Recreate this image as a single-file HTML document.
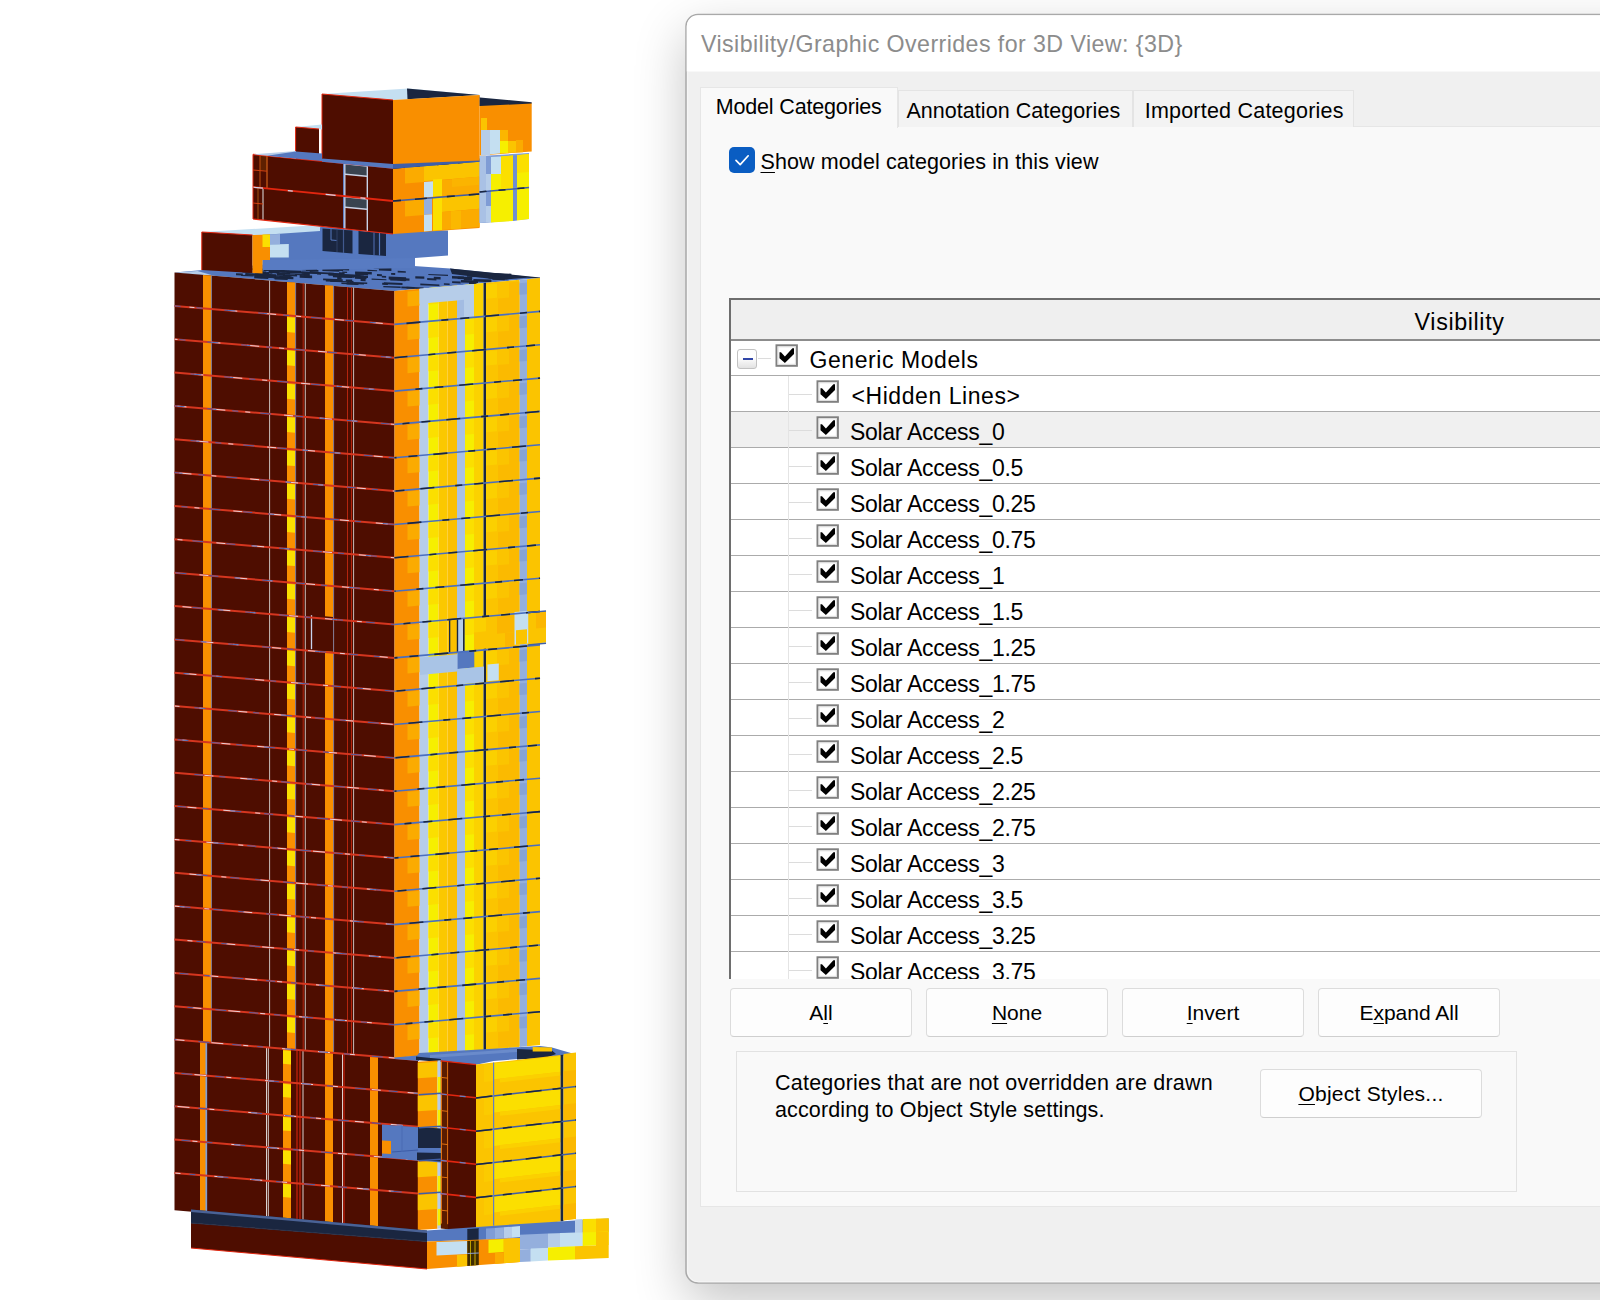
<!DOCTYPE html>
<html><head><meta charset="utf-8"><title>Visibility/Graphic Overrides</title>
<style>
html,body{margin:0;padding:0;background:#fff;}
body{width:1600px;height:1300px;overflow:hidden;position:relative;font-family:"Liberation Sans",sans-serif;color:#000;}
#bld{position:absolute;left:0;top:0;}
#dlg{position:absolute;left:686px;top:14px;width:1000px;height:1269px;border-radius:12px;background:#f0f0f0;box-shadow:0 19px 52px 0 rgba(0,0,0,0.235);}
#frame{position:absolute;left:680px;top:0;}
#w{position:absolute;left:0;top:0;width:0;height:0;}
#w>*{position:absolute;}
#titlebar{display:none}
#title{position:absolute;left:701px;top:31px;font-size:23.2px;line-height:26px;color:#8c8c8c;letter-spacing:0.43px;white-space:nowrap;}
#panel{left:700px;top:126px;width:1000px;height:1080.5px;background:#f9f9f9;border:1px solid #e6e6e6;box-sizing:border-box;}
.tab{top:90px;height:37px;background:#f3f3f3;border:1px solid #e4e4e4;border-bottom:none;box-sizing:border-box;font-size:21.5px;}
.tab span{position:absolute;top:8px;line-height:24px;white-space:nowrap;}
.tab.act{top:87px;height:41px;background:#f9f9f9;border-color:#e6e6e6;}
.tab.act span{top:7px;}
#chk{left:729px;top:147px;width:26px;height:26px;background:#0a5dc2;border-radius:5px;}
#chklbl{left:760.5px;top:149.8px;font-size:21.5px;line-height:24px;white-space:nowrap;letter-spacing:0.1px;}
u{text-decoration-thickness:1.2px;text-underline-offset:2.5px;}
#tbl{left:729px;top:298px;width:1000px;height:700px;border:2px solid #6e6e6e;background:#fff;box-sizing:border-box;overflow:hidden;}
#thead{position:absolute;left:0;top:0;width:1000px;height:39px;background:#efefef;border-bottom:2px solid #8c8c8c;}
#thead span{position:absolute;left:683.6px;top:8.5px;font-size:23.3px;line-height:26px;letter-spacing:0.62px;}
.row{position:absolute;left:0;width:1000px;height:35px;border-bottom:1px solid #ababab;border-top:0;}
.row.sel{background:#f0f0f0;}
.rt{position:absolute;top:6.6px;font-size:23px;line-height:26px;letter-spacing:-0.3px;white-space:nowrap;}
.vline{width:1px;background:#e4e4e4;}
.hline{height:1px;background:#dcdcdc;}
#minus{left:737px;top:348.5px;width:20px;height:20px;border:1px solid #c2c2c2;border-radius:3px;box-sizing:border-box;background:linear-gradient(#fdfdfd,#fff 40%,#e2e2e2);}
#minus i{position:absolute;left:5px;top:8px;width:10px;height:2px;background:#3146a8;}
.cb{display:block;}
#mask{left:701px;top:979px;width:1000px;height:60px;background:#f9f9f9;}
.btn{background:#fdfdfd;border:1px solid #dcdcdc;border-bottom-color:#cfcfcf;border-radius:4px;box-sizing:border-box;font-size:21px;}
.btn span{position:absolute;left:0;right:0;top:12px;text-align:center;line-height:24px;white-space:nowrap;}
#grp{left:736px;top:1051px;width:781px;height:141px;border:1px solid #e2e2e2;box-sizing:border-box;}
#note{left:775px;top:1070.4px;font-size:21.5px;line-height:27px;letter-spacing:0.23px;white-space:nowrap;}
</style></head>
<body>
<svg id="bld" width="680" height="1300" viewBox="0 0 680 1300" shape-rendering="geometricPrecision">
<polygon points="174.5,272.5 394.5,291 540,278 450,268.5 320,259.5" fill="#5578bf"/>
<polygon points="174.5,272.5 197.5,271 215,276" fill="#b6cde9"/>
<polygon points="450,268.5 540,277.5 540,278.5 527,277.8 500,280 452,274" fill="#1a2640"/>
<polygon points="320.8,266.7 335.2,267.3 335.2,268.4 320.8,267.9" fill="#1a2640"/>
<polygon points="377,274 381.9,274.2 381.9,276.3 377,276.1" fill="#1a2640"/>
<polygon points="244.9,271.2 250.1,271.4 250.1,272.6 244.9,272.4" fill="#1a2640"/>
<polygon points="347.5,280.8 353.5,281.1 353.5,282.5 347.5,282.3" fill="#1a2640"/>
<polygon points="401.3,286.4 414.5,286.9 414.5,288.7 401.3,288.2" fill="#1a2640"/>
<polygon points="493.7,273 511.4,273.7 511.4,275.3 493.7,274.6" fill="#1a2640"/>
<polygon points="273.2,269.2 282.2,269.5 282.2,272.1 273.2,271.8" fill="#1a2640"/>
<polygon points="282.9,274.2 297.1,274.7 297.1,276.5 282.9,275.9" fill="#1a2640"/>
<polygon points="380.2,268.3 385.1,268.4 385.1,269.9 380.2,269.7" fill="#1a2640"/>
<polygon points="415.3,276.2 424.3,276.6 424.3,278.7 415.3,278.4" fill="#1a2640"/>
<polygon points="355.1,271.4 371.8,272.1 371.8,274.5 355.1,273.8" fill="#1a2640"/>
<polygon points="299.7,274.9 312.1,275.4 312.1,278.2 299.7,277.7" fill="#1a2640"/>
<polygon points="428.3,273.9 448,274.7 448,275.9 428.3,275.1" fill="#1a2640"/>
<polygon points="345.8,279.4 352.2,279.6 352.2,281.6 345.8,281.4" fill="#1a2640"/>
<polygon points="245.4,273 261.6,273.6 261.6,275.8 245.4,275.1" fill="#1a2640"/>
<polygon points="467,274.5 482.1,275.1 482.1,277.3 467,276.7" fill="#1a2640"/>
<polygon points="388.7,276.6 406.1,277.3 406.1,280.2 388.7,279.5" fill="#1a2640"/>
<polygon points="360.6,278.7 365.6,278.9 365.6,281.3 360.6,281.1" fill="#1a2640"/>
<polygon points="406.5,286.8 423.6,287.5 423.6,289.1 406.5,288.4" fill="#1a2640"/>
<polygon points="337.2,277.1 341.6,277.3 341.6,279.2 337.2,279" fill="#1a2640"/>
<polygon points="279.5,269.2 284.5,269.4 284.5,271.9 279.5,271.7" fill="#1a2640"/>
<polygon points="269.3,270.3 279.5,270.8 279.5,273.5 269.3,273.1" fill="#1a2640"/>
<polygon points="256.4,271.8 269.1,272.3 269.1,275 256.4,274.5" fill="#1a2640"/>
<polygon points="452.1,281.2 460.6,281.5 460.6,283.4 452.1,283" fill="#1a2640"/>
<polygon points="330.1,280.5 349.4,281.3 349.4,282.6 330.1,281.8" fill="#1a2640"/>
<polygon points="281.7,270.4 289.4,270.7 289.4,272.7 281.7,272.4" fill="#1a2640"/>
<polygon points="391.1,272.9 395.2,273 395.2,274.9 391.1,274.7" fill="#1a2640"/>
<polygon points="332.9,274.9 352.1,275.7 352.1,278.1 332.9,277.3" fill="#1a2640"/>
<polygon points="371.6,278.6 386.4,279.2 386.4,280.3 371.6,279.7" fill="#1a2640"/>
<polygon points="473.4,278.9 491.4,279.6 491.4,282.2 473.4,281.5" fill="#1a2640"/>
<polygon points="339,272.3 344.6,272.5 344.6,274.8 339,274.6" fill="#1a2640"/>
<polygon points="251.5,268.5 258.8,268.8 258.8,270.2 251.5,269.9" fill="#1a2640"/>
<polygon points="325.1,265.2 329.1,265.4 329.1,266.7 325.1,266.5" fill="#1a2640"/>
<polygon points="261.9,271.2 266.3,271.4 266.3,274.1 261.9,274" fill="#1a2640"/>
<polygon points="397.7,270.8 405.8,271.2 405.8,272.8 397.7,272.5" fill="#1a2640"/>
<polygon points="331.5,266.8 349.1,267.5 349.1,270.5 331.5,269.8" fill="#1a2640"/>
<polygon points="358.5,275.1 363.9,275.4 363.9,276.6 358.5,276.3" fill="#1a2640"/>
<polygon points="325.8,269 343.1,269.7 343.1,271.1 325.8,270.4" fill="#1a2640"/>
<polygon points="241.1,274.8 253.6,275.3 253.6,276.5 241.1,276" fill="#1a2640"/>
<polygon points="378.9,267.5 391.4,268 391.4,270.9 378.9,270.4" fill="#1a2640"/>
<polygon points="463.8,278.6 472,278.9 472,280.6 463.8,280.3" fill="#1a2640"/>
<polygon points="279.3,276 291.8,276.5 291.8,279 279.3,278.5" fill="#1a2640"/>
<polygon points="322.4,268.1 339.3,268.8 339.3,271.7 322.4,271.1" fill="#1a2640"/>
<polygon points="460.9,279.9 478,280.6 478,283.1 460.9,282.4" fill="#1a2640"/>
<polygon points="295.1,274 304.8,274.4 304.8,275.5 295.1,275.1" fill="#1a2640"/>
<polygon points="242.4,270 250.6,270.3 250.6,272.7 242.4,272.4" fill="#1a2640"/>
<polygon points="488.5,275.6 507.5,276.4 507.5,279.4 488.5,278.6" fill="#1a2640"/>
<polygon points="488.1,275 495.6,275.3 495.6,276.8 488.1,276.5" fill="#1a2640"/>
<polygon points="287.1,270.2 301.1,270.8 301.1,273.6 287.1,273" fill="#1a2640"/>
<polygon points="457.7,276.4 472.2,277 472.2,279.6 457.7,279" fill="#1a2640"/>
<polygon points="257.5,273.6 276,274.3 276,276.9 257.5,276.2" fill="#1a2640"/>
<polygon points="433.8,276.8 440.6,277 440.6,279.6 433.8,279.3" fill="#1a2640"/>
<polygon points="323.1,278.4 342.7,279.2 342.7,281 323.1,280.2" fill="#1a2640"/>
<polygon points="341.4,282.6 357,283.2 357,284.5 341.4,283.9" fill="#1a2640"/>
<polygon points="268.7,269.4 287.1,270.2 287.1,272.8 268.7,272" fill="#1a2640"/>
<polygon points="273.7,276.1 293.4,276.9 293.4,279.2 273.7,278.5" fill="#1a2640"/>
<polygon points="327.9,274.3 334,274.5 334,275.5 327.9,275.3" fill="#1a2640"/>
<polygon points="492.3,276.9 504.7,277.4 504.7,280.3 492.3,279.8" fill="#1a2640"/>
<polygon points="350,281.9 367.2,282.5 367.2,284 350,283.3" fill="#1a2640"/>
<polygon points="301.7,271.6 309.6,271.9 309.6,274.1 301.7,273.7" fill="#1a2640"/>
<polygon points="303.7,273.2 309.8,273.4 309.8,276.2 303.7,276" fill="#1a2640"/>
<polygon points="328.8,272.7 342.1,273.2 342.1,276 328.8,275.5" fill="#1a2640"/>
<polygon points="346.5,282.4 358.5,282.9 358.5,285 346.5,284.5" fill="#1a2640"/>
<polygon points="373.7,267.1 384.8,267.5 384.8,268.9 373.7,268.4" fill="#1a2640"/>
<polygon points="236,273.3 242.8,273.6 242.8,275.6 236,275.3" fill="#1a2640"/>
<polygon points="427.2,278.1 436.4,278.5 436.4,280.5 427.2,280.1" fill="#1a2640"/>
<polygon points="382.2,282.7 387.9,282.9 387.9,285 382.2,284.8" fill="#1a2640"/>
<polygon points="300.9,271.4 317.2,272 317.2,274 300.9,273.4" fill="#1a2640"/>
<polygon points="383.9,282.3 402.5,283.1 402.5,285 383.9,284.2" fill="#1a2640"/>
<polygon points="397.3,277.9 409.5,278.4 409.5,280.8 397.3,280.3" fill="#1a2640"/>
<polygon points="354.9,275.8 366.5,276.3 366.5,279.2 354.9,278.7" fill="#1a2640"/>
<polygon points="420.3,283.6 439.4,284.4 439.4,285.9 420.3,285.2" fill="#1a2640"/>
<polygon points="383.3,285.9 400.7,286.6 400.7,287.9 383.3,287.2" fill="#1a2640"/>
<polygon points="267.2,272.1 272.4,272.3 272.4,273.8 267.2,273.6" fill="#1a2640"/>
<polygon points="254.4,273.5 270.9,274.2 270.9,277 254.4,276.3" fill="#1a2640"/>
<polygon points="275.9,275.2 290.5,275.8 290.5,277.1 275.9,276.5" fill="#1a2640"/>
<polygon points="469,281 476.5,281.3 476.5,284.2 469,283.9" fill="#1a2640"/>
<polygon points="340.5,274 360.4,274.8 360.4,277.5 340.5,276.7" fill="#1a2640"/>
<polygon points="277.8,272.4 290,272.9 290,274.6 277.8,274.1" fill="#1a2640"/>
<polygon points="286.9,271.5 302.4,272.1 302.4,273.1 286.9,272.5" fill="#1a2640"/>
<polygon points="381.8,275.8 386.1,276 386.1,277.7 381.8,277.5" fill="#1a2640"/>
<polygon points="400.3,278 405.4,278.2 405.4,281.2 400.3,281" fill="#1a2640"/>
<polygon points="443.9,283.2 449.6,283.4 449.6,285 443.9,284.7" fill="#1a2640"/>
<polygon points="245.5,273.8 253.8,274.2 253.8,275.4 245.5,275.1" fill="#1a2640"/>
<polygon points="346.9,282.3 364,283 364,284.5 346.9,283.9" fill="#1a2640"/>
<polygon points="274.6,277.1 287.7,277.6 287.7,280 274.6,279.5" fill="#1a2640"/>
<polygon points="258.7,268.5 273.7,269.1 273.7,270.9 258.7,270.3" fill="#1a2640"/>
<polygon points="254.2,275.7 268.3,276.3 268.3,278.9 254.2,278.3" fill="#1a2640"/>
<polygon points="257.2,275.2 262.3,275.4 262.3,278.2 257.2,278" fill="#1a2640"/>
<polygon points="355.2,272.2 368.1,272.7 368.1,275.6 355.2,275" fill="#1a2640"/>
<polygon points="306,269.6 318.4,270.1 318.4,271.6 306,271.1" fill="#1a2640"/>
<polygon points="264,269.5 268.8,269.6 268.8,271.1 264,270.9" fill="#1a2640"/>
<polygon points="317.7,272.1 333.8,272.8 333.8,274.4 317.7,273.7" fill="#1a2640"/>
<polygon points="367.5,269.8 377.1,270.2 377.1,271.2 367.5,270.9" fill="#1a2640"/>
<polygon points="301.4,268.2 317.1,268.8 317.1,270.9 301.4,270.3" fill="#1a2640"/>
<polygon points="285.2,273.1 304.2,273.9 304.2,275.1 285.2,274.3" fill="#1a2640"/>
<polygon points="452,275.9 463.9,276.4 463.9,279 452,278.6" fill="#1a2640"/>
<polygon points="339.2,274.3 354.2,274.9 354.2,277.8 339.2,277.2" fill="#1a2640"/>
<polygon points="325.8,279.2 341.1,279.8 341.1,282.1 325.8,281.5" fill="#1a2640"/>
<polygon points="342.2,271.5 347.1,271.7 347.1,273 342.2,272.8" fill="#1a2640"/>
<polygon points="253.7,274 261.8,274.4 261.8,275.7 253.7,275.4" fill="#1a2640"/>
<polygon points="257.4,275.1 275.3,275.8 275.3,278.2 257.4,277.5" fill="#1a2640"/>
<polygon points="309.7,271.1 318.4,271.5 318.4,273.4 309.7,273" fill="#1a2640"/>
<polygon points="276.7,272.5 285,272.8 285,275.8 276.7,275.4" fill="#1a2640"/>
<polygon points="492.7,276.2 500.7,276.6 500.7,279.5 492.7,279.2" fill="#1a2640"/>
<polygon points="317,272.8 321,273 321,274.7 317,274.6" fill="#1a2640"/>
<polygon points="360.8,275.7 368,275.9 368,278 360.8,277.7" fill="#1a2640"/>
<polygon points="236.3,269.8 241.7,270 241.7,271.8 236.3,271.6" fill="#1a2640"/>
<polygon points="246,268.2 254.9,268.5 254.9,270 246,269.6" fill="#1a2640"/>
<polygon points="390.2,278.2 406.2,278.8 406.2,281.1 390.2,280.5" fill="#1a2640"/>
<polygon points="262.5,232 322,227 448,230.5 448,255.5 415,258 415,268 262.5,266" fill="#5578bf"/>
<polygon points="262.5,260 415,258 415,268 300,270 262.5,270" fill="#587bc2"/>
<polygon points="322.5,228.5 352.5,230.5 352.5,253.5 322.5,251" fill="#1a2640"/>
<polygon points="358.5,231 386,233.5 386,256 358.5,254" fill="#1a2640"/>
<line x1="331" y1="229" x2="331" y2="240" stroke="#5578bf" stroke-width="1"/>
<line x1="331" y1="240" x2="337" y2="240.5" stroke="#5578bf" stroke-width="1"/>
<line x1="337" y1="230" x2="337" y2="252" stroke="#2c3c60" stroke-width="1.2"/>
<line x1="343.5" y1="230" x2="343.5" y2="253" stroke="#41598f" stroke-width="1.2"/>
<line x1="374" y1="232.5" x2="374" y2="255" stroke="#41598f" stroke-width="1.5"/>
<line x1="379.5" y1="233" x2="379.5" y2="255.5" stroke="#5578bf" stroke-width="1.2"/>
<polygon points="201.8,232 320,225 320,231 252.5,235.5" fill="#c4dff1"/>
<polygon points="201.8,232 252.5,235 252.5,273 201.8,270" fill="#4e0d00"/>
<polygon points="252.5,235 270,234.5 270,260 262.5,260 262.5,273.5 252.5,273" fill="#f98f00"/>
<polygon points="262.5,234.5 270,234.5 270,247 262.5,247" fill="#fbdf00"/>
<polygon points="270,234.3 280,234 280,244 270,244.5" fill="#94afdd"/>
<polygon points="270,244.5 288.8,244 288.8,257.5 270,257.5" fill="#c4dff1"/>
<line x1="201.8" y1="232" x2="252.5" y2="235" stroke="#e2260f" stroke-width="1.2"/>
<line x1="201.8" y1="232" x2="201.8" y2="270" stroke="#e2260f" stroke-width="1"/>
<polygon points="253,154.4 393,168 393,234 253,219" fill="#4e0d00"/>
<polygon points="260,155.2 267,155.8 267,171 260,170.5" fill="#5e2000"/>
<line x1="260" y1="155" x2="260" y2="187" stroke="#c05010" stroke-width="1"/>
<line x1="267" y1="155.8" x2="267" y2="188" stroke="#d06018" stroke-width="1.2"/>
<line x1="253" y1="170" x2="267" y2="171.2" stroke="#d04010" stroke-width="1"/>
<line x1="263" y1="188" x2="263" y2="220" stroke="#c9c2c0" stroke-width="1.2"/>
<line x1="258" y1="187.5" x2="258" y2="219.5" stroke="#a05010" stroke-width="1"/>
<line x1="253" y1="203" x2="263" y2="204" stroke="#d04010" stroke-width="1"/>
<polygon points="343,163.2 368,165.7 368,198.5 343,196" fill="#c9d3e6"/>
<polygon points="345.5,164.6 366.6,166.8 366.6,175.6 345.5,173.6" fill="#39434f"/>
<polygon points="345.5,175 366.6,177 366.6,198 345.5,196" fill="#4e0d00"/>
<line x1="343.6" y1="163.4" x2="343.6" y2="196" stroke="#5f7fc4" stroke-width="1.2"/>
<polygon points="343,196.2 368,198.7 368,231.5 343,229" fill="#c9d3e6"/>
<polygon points="345.5,197.6 366.6,199.8 366.6,208.6 345.5,206.6" fill="#39434f"/>
<polygon points="345.5,208 366.6,210 366.6,231 345.5,229" fill="#4e0d00"/>
<line x1="343.6" y1="196.4" x2="343.6" y2="229" stroke="#5f7fc4" stroke-width="1.2"/>
<line x1="253" y1="154.4" x2="393" y2="168" stroke="#e2260f" stroke-width="1.5"/>
<line x1="253" y1="187" x2="393" y2="201" stroke="#e2260f" stroke-width="1.8"/>
<line x1="253" y1="187.2" x2="393" y2="201.2" stroke="#cfd6ea" stroke-width="1.2" stroke-dasharray="10 25 5 33"/>
<line x1="253" y1="219" x2="393" y2="234" stroke="#e2260f" stroke-width="1.2"/>
<line x1="253" y1="154.4" x2="253" y2="219" stroke="#e2260f" stroke-width="1"/>
<polygon points="393,168 479.6,161 479.6,228 393,234" fill="#f98f00"/>
<polygon points="405,167 424,165.5 424,182 405,183.5" fill="#fbab00"/>
<polygon points="424,165.5 479.6,161 479.6,176.8 424,181.3" fill="#fbc400"/>
<polygon points="424,182 433,181.3 433,196.8 424,197.5" fill="#c4dff1"/>
<polygon points="433,179.6 442,178.9 442,196 433,196.8" fill="#fbdf00"/>
<polygon points="442,179.9 479.6,176.8 479.6,193 442,196" fill="#fbab00"/>
<polygon points="452,179.1 479.6,176.8 479.6,184.8 452,187" fill="#fbb400"/>
<polygon points="405,201 424,199.5 424,215 405,216.5" fill="#fbab00"/>
<polygon points="424,198.5 432,197.8 432,214.3 424,215" fill="#94afdd"/>
<polygon points="424,215 432,214.3 432,230.8 424,231.5" fill="#c4dff1"/>
<polygon points="433,197.8 442,197 442,230 433,230.8" fill="#fbdf00"/>
<polygon points="442,197 479.6,194 479.6,208.8 442,211.9" fill="#fbc400"/>
<polygon points="442,211.9 479.6,208.8 479.6,227 442,230" fill="#fbab00"/>
<polygon points="451,211.2 461,210.4 461,228.5 451,229.3" fill="#fbb800"/>
<line x1="393" y1="201" x2="479.6" y2="194" stroke="#3f5fa8" stroke-width="1.6"/>
<line x1="393" y1="201" x2="479.6" y2="194" stroke="#1a2640" stroke-width="1.6" stroke-dasharray="8 14 12 20"/>
<line x1="393" y1="168" x2="479.6" y2="161" stroke="#3f5fa8" stroke-width="1.4"/>
<line x1="393" y1="168" x2="479.6" y2="161" stroke="#1a2640" stroke-width="1.4" stroke-dasharray="12 9 6 17"/>
<polygon points="479.6,156 529,153 529,219 483,223 479.6,223" fill="#7f9cd5"/>
<polygon points="479.6,156 486,155.6 486,222.5 479.6,223" fill="#a9c1e5"/>
<polygon points="491,157 501,156.5 501,174 491,174" fill="#c4dff1"/>
<polygon points="501,156.5 513,155.5 513,221 491,222.5 491,174 501,174" fill="#f6ef00"/>
<polygon points="501,156.5 513,155.5 513,188 501,189" fill="#fbdf00"/>
<polygon points="513,155.5 517,155.2 517,220.5 513,221" fill="#6f8fd0"/>
<polygon points="517,155.2 529,154 529,219 517,220.5" fill="#f6ef00"/>
<polygon points="517,155.2 529,154 529,172 517,173" fill="#fbdf00"/>
<line x1="479.6" y1="192" x2="529" y2="187.5" stroke="#3f5fa8" stroke-width="1.5"/>
<line x1="479.6" y1="192" x2="529" y2="187.5" stroke="#1a2640" stroke-width="1.5" stroke-dasharray="7 12"/>
<polygon points="486,174 491,174 491,190 486,190.5" fill="#b6cde9"/>
<polygon points="486,206 491,206 491,222 486,222.5" fill="#b6cde9"/>
<polygon points="322,155 393,162 393,168.8 322,161.8" fill="#5578bf"/>
<polygon points="393,162 479.6,158.5 479.6,161.8 393,168.8" fill="#3f5fa8"/>
<polygon points="322,94 393,100 479.6,95 408.6,88.4" fill="#c4dff1"/>
<polygon points="407,88.4 479.6,95 407.5,99.2" fill="#1a2640"/>
<polygon points="322,94 393,100 393,164 322,158.4" fill="#4e0d00"/>
<polygon points="393,100 479.6,95 479.6,160.5 393,164" fill="#f98f00"/>
<line x1="322" y1="94" x2="393" y2="100" stroke="#e2260f" stroke-width="1.2"/>
<line x1="322" y1="94" x2="322" y2="158.4" stroke="#e2260f" stroke-width="1"/>
<polygon points="479.6,100 531.7,103 531.7,151.5 479.6,155.5" fill="#f98f00"/>
<polygon points="479.6,95 480,97.5 531.7,102.3 531.7,103.6 480,106 479.6,106" fill="#1a2640"/>
<polygon points="481,118 487,118 487,130 481,130" fill="#fbc400"/>
<polygon points="481,130 500,130 500,153.5 481,155" fill="#c4dff1"/>
<polygon points="481,130 490,130 490,155 481,155.5" fill="#b6cde9"/>
<polygon points="500,130 508,130 508,141 500,141" fill="#fbb600"/>
<polygon points="500,141 508,141 508,153 500,153.5" fill="#f6ef00"/>
<polygon points="508,141 516,141 516,152.6 508,153" fill="#fbc400"/>
<polygon points="516,140 523,140 523,152.3 516,152.6" fill="#fbab00"/>
<polygon points="295.6,127 322,124.5 322,129.5 319,129" fill="#c4dff1"/>
<polygon points="295.6,127 319,129 319,157 295.6,155" fill="#4e0d00"/>
<line x1="295.6" y1="127" x2="319" y2="129" stroke="#e2260f" stroke-width="1"/>
<line x1="295.6" y1="127" x2="295.6" y2="155" stroke="#e2260f" stroke-width="1"/>
<polygon points="253,154.4 296,151 296,158.5" fill="#b6cde9"/>
<polygon points="267,155.8 296,151.5 322,153.5 322,161 300,159" fill="#5578bf"/>
<polygon points="174.5,272.5 394.5,291 394.5,1058.1 174.5,1039.6" fill="#4e0d00"/>
<polygon points="174.5,1039.6 418,1060 418,1230.8 174.5,1210.3" fill="#4e0d00"/>
<polygon points="203,274.9 211,275.6 211,1042.6 203,1041.9" fill="#f98f00"/>
<polygon points="287,282 295,282.6 295,1049.7 287,1049" fill="#f98f00"/>
<polygon points="287,317 295,317.7 295,332.7 287,332" fill="#fbdf00"/>
<polygon points="287,350.3 295,351 295,366 287,365.3" fill="#fbdf00"/>
<polygon points="287,383.7 295,384.4 295,399.4 287,398.7" fill="#fbdf00"/>
<polygon points="287,417 295,417.7 295,432.7 287,432" fill="#fbdf00"/>
<polygon points="287,450.4 295,451.1 295,466.1 287,465.4" fill="#fbdf00"/>
<polygon points="287,483.7 295,484.4 295,499.4 287,498.7" fill="#fbdf00"/>
<polygon points="287,517.1 295,517.8 295,532.8 287,532.1" fill="#fbdf00"/>
<polygon points="287,550.4 295,551.1 295,566.1 287,565.4" fill="#fbdf00"/>
<polygon points="287,583.8 295,584.5 295,599.5 287,598.8" fill="#fbdf00"/>
<polygon points="287,617.1 295,617.8 295,632.8 287,632.1" fill="#fbdf00"/>
<polygon points="287,650.5 295,651.2 295,666.2 287,665.5" fill="#fbdf00"/>
<polygon points="287,683.8 295,684.5 295,699.5 287,698.8" fill="#fbdf00"/>
<polygon points="287,717.2 295,717.9 295,732.9 287,732.2" fill="#fbdf00"/>
<polygon points="287,750.5 295,751.2 295,766.2 287,765.5" fill="#fbdf00"/>
<polygon points="287,783.9 295,784.6 295,799.6 287,798.9" fill="#fbdf00"/>
<polygon points="287,817.2 295,817.9 295,832.9 287,832.2" fill="#fbdf00"/>
<polygon points="287,850.6 295,851.3 295,866.3 287,865.6" fill="#fbdf00"/>
<polygon points="287,883.9 295,884.6 295,899.6 287,898.9" fill="#fbdf00"/>
<polygon points="287,917.3 295,918 295,933 287,932.3" fill="#fbdf00"/>
<polygon points="287,950.6 295,951.3 295,966.3 287,965.6" fill="#fbdf00"/>
<polygon points="287,984 295,984.7 295,999.7 287,999" fill="#fbdf00"/>
<polygon points="287,1017.3 295,1018 295,1033 287,1032.3" fill="#fbdf00"/>
<polygon points="325,285.2 333,285.8 333,617 325,616.3" fill="#f98f00"/>
<polygon points="325,651 333,651.7 333,1052.9 325,1052.2" fill="#f98f00"/>
<line x1="311.5" y1="615.2" x2="311.5" y2="649.2" stroke="#c8d4ee" stroke-width="1.3"/>
<line x1="269.6" y1="280.5" x2="269.6" y2="1047.5" stroke="#d8d2d0" stroke-width="0.9"/>
<line x1="303.2" y1="283.3" x2="303.2" y2="1050.4" stroke="#c02810" stroke-width="0.9"/>
<line x1="305.3" y1="283.5" x2="305.3" y2="1050.5" stroke="#d8d2d0" stroke-width="0.9"/>
<line x1="347.5" y1="287" x2="347.5" y2="1054.1" stroke="#c02810" stroke-width="0.9"/>
<line x1="351.5" y1="287.4" x2="351.5" y2="1054.4" stroke="#c02810" stroke-width="0.9"/>
<line x1="353.6" y1="287.6" x2="353.6" y2="1054.6" stroke="#d8d2d0" stroke-width="0.9"/>
<line x1="211.4" y1="275.6" x2="211.4" y2="1042.7" stroke="#8d90ad" stroke-width="0.9"/>
<line x1="295.6" y1="282.7" x2="295.6" y2="1049.7" stroke="#8d90ad" stroke-width="0.9"/>
<line x1="333.6" y1="285.9" x2="333.6" y2="1052.9" stroke="#8d90ad" stroke-width="0.9"/>
<polygon points="200,1041.7 206,1042.2 206,1212.3 200,1211.8" fill="#f98f00"/>
<line x1="206.3" y1="1042.2" x2="206.3" y2="1212.3" stroke="#7f9fd6" stroke-width="1.7"/>
<polygon points="283,1048.7 291,1049.3 291,1219.4 283,1218.8" fill="#f98f00"/>
<polygon points="283,1050.3 291,1051 291,1064.4 283,1063.7" fill="#fbdf00"/>
<polygon points="283,1083.7 291,1084.4 291,1097.7 283,1097" fill="#fbdf00"/>
<polygon points="283,1117 291,1117.7 291,1131.1 283,1130.4" fill="#fbdf00"/>
<polygon points="283,1150.4 291,1151.1 291,1164.4 283,1163.7" fill="#fbdf00"/>
<polygon points="283,1183.7 291,1184.4 291,1197.8 283,1197.1" fill="#fbdf00"/>
<polygon points="325,1052.2 333,1052.9 333,1223 325,1222.3" fill="#f98f00"/>
<polygon points="370,1056 378,1056.7 378,1226.7 370,1226.1" fill="#f98f00"/>
<line x1="266.5" y1="1047.3" x2="266.5" y2="1217.4" stroke="#d8d2d0" stroke-width="1.0"/>
<line x1="268.3" y1="1047.4" x2="268.3" y2="1217.5" stroke="#d8d2d0" stroke-width="1.0"/>
<line x1="297" y1="1049.9" x2="297" y2="1219.9" stroke="#e2260f" stroke-width="1.0"/>
<line x1="300" y1="1050.1" x2="300" y2="1220.2" stroke="#e2260f" stroke-width="1.0"/>
<line x1="303" y1="1050.4" x2="303" y2="1220.4" stroke="#d8d2d0" stroke-width="1.0"/>
<line x1="342.5" y1="1053.7" x2="342.5" y2="1223.8" stroke="#d8d2d0" stroke-width="1.0"/>
<line x1="344" y1="1053.8" x2="344" y2="1223.9" stroke="#e2260f" stroke-width="1.0"/>
<line x1="174.5" y1="305.9" x2="394.5" y2="324.4" stroke="#d5361f" stroke-width="2.0"/>
<line x1="174.5" y1="305.9" x2="394.5" y2="324.4" stroke="#e9e4ee" stroke-width="0.9" stroke-dasharray="12 20 5 34 9 27" stroke-dashoffset="17"/>
<line x1="174.5" y1="305.9" x2="394.5" y2="324.4" stroke="#3f62b4" stroke-width="0.9" stroke-dasharray="0 14 9 16 6 22 11 9" stroke-dashoffset="17"/>
<line x1="174.5" y1="339.2" x2="394.5" y2="357.7" stroke="#d5361f" stroke-width="2.0"/>
<line x1="174.5" y1="339.2" x2="394.5" y2="357.7" stroke="#e9e4ee" stroke-width="0.9" stroke-dasharray="12 20 5 34 9 27" stroke-dashoffset="34"/>
<line x1="174.5" y1="339.2" x2="394.5" y2="357.7" stroke="#3f62b4" stroke-width="0.9" stroke-dasharray="0 14 9 16 6 22 11 9" stroke-dashoffset="34"/>
<line x1="174.5" y1="372.6" x2="394.5" y2="391.1" stroke="#d5361f" stroke-width="2.0"/>
<line x1="174.5" y1="372.6" x2="394.5" y2="391.1" stroke="#e9e4ee" stroke-width="0.9" stroke-dasharray="12 20 5 34 9 27" stroke-dashoffset="51"/>
<line x1="174.5" y1="372.6" x2="394.5" y2="391.1" stroke="#3f62b4" stroke-width="0.9" stroke-dasharray="0 14 9 16 6 22 11 9" stroke-dashoffset="51"/>
<line x1="174.5" y1="405.9" x2="394.5" y2="424.4" stroke="#d5361f" stroke-width="2.0"/>
<line x1="174.5" y1="405.9" x2="394.5" y2="424.4" stroke="#e9e4ee" stroke-width="0.9" stroke-dasharray="12 20 5 34 9 27" stroke-dashoffset="68"/>
<line x1="174.5" y1="405.9" x2="394.5" y2="424.4" stroke="#3f62b4" stroke-width="0.9" stroke-dasharray="0 14 9 16 6 22 11 9" stroke-dashoffset="68"/>
<line x1="174.5" y1="439.2" x2="394.5" y2="457.8" stroke="#d5361f" stroke-width="2.0"/>
<line x1="174.5" y1="439.2" x2="394.5" y2="457.8" stroke="#e9e4ee" stroke-width="0.9" stroke-dasharray="12 20 5 34 9 27" stroke-dashoffset="85"/>
<line x1="174.5" y1="439.2" x2="394.5" y2="457.8" stroke="#3f62b4" stroke-width="0.9" stroke-dasharray="0 14 9 16 6 22 11 9" stroke-dashoffset="85"/>
<line x1="174.5" y1="472.6" x2="394.5" y2="491.1" stroke="#d5361f" stroke-width="2.0"/>
<line x1="174.5" y1="472.6" x2="394.5" y2="491.1" stroke="#e9e4ee" stroke-width="0.9" stroke-dasharray="12 20 5 34 9 27" stroke-dashoffset="102"/>
<line x1="174.5" y1="472.6" x2="394.5" y2="491.1" stroke="#3f62b4" stroke-width="0.9" stroke-dasharray="0 14 9 16 6 22 11 9" stroke-dashoffset="102"/>
<line x1="174.5" y1="506" x2="394.5" y2="524.5" stroke="#d5361f" stroke-width="2.0"/>
<line x1="174.5" y1="506" x2="394.5" y2="524.5" stroke="#e9e4ee" stroke-width="0.9" stroke-dasharray="12 20 5 34 9 27" stroke-dashoffset="119"/>
<line x1="174.5" y1="506" x2="394.5" y2="524.5" stroke="#3f62b4" stroke-width="0.9" stroke-dasharray="0 14 9 16 6 22 11 9" stroke-dashoffset="119"/>
<line x1="174.5" y1="539.3" x2="394.5" y2="557.8" stroke="#d5361f" stroke-width="2.0"/>
<line x1="174.5" y1="539.3" x2="394.5" y2="557.8" stroke="#e9e4ee" stroke-width="0.9" stroke-dasharray="12 20 5 34 9 27" stroke-dashoffset="136"/>
<line x1="174.5" y1="539.3" x2="394.5" y2="557.8" stroke="#3f62b4" stroke-width="0.9" stroke-dasharray="0 14 9 16 6 22 11 9" stroke-dashoffset="136"/>
<line x1="174.5" y1="572.7" x2="394.5" y2="591.2" stroke="#d5361f" stroke-width="2.0"/>
<line x1="174.5" y1="572.7" x2="394.5" y2="591.2" stroke="#e9e4ee" stroke-width="0.9" stroke-dasharray="12 20 5 34 9 27" stroke-dashoffset="153"/>
<line x1="174.5" y1="572.7" x2="394.5" y2="591.2" stroke="#3f62b4" stroke-width="0.9" stroke-dasharray="0 14 9 16 6 22 11 9" stroke-dashoffset="153"/>
<line x1="174.5" y1="606" x2="394.5" y2="624.5" stroke="#d5361f" stroke-width="2.0"/>
<line x1="174.5" y1="606" x2="394.5" y2="624.5" stroke="#e9e4ee" stroke-width="0.9" stroke-dasharray="12 20 5 34 9 27" stroke-dashoffset="170"/>
<line x1="174.5" y1="606" x2="394.5" y2="624.5" stroke="#3f62b4" stroke-width="0.9" stroke-dasharray="0 14 9 16 6 22 11 9" stroke-dashoffset="170"/>
<line x1="174.5" y1="639.4" x2="394.5" y2="657.9" stroke="#d5361f" stroke-width="2.0"/>
<line x1="174.5" y1="639.4" x2="394.5" y2="657.9" stroke="#e9e4ee" stroke-width="0.9" stroke-dasharray="12 20 5 34 9 27" stroke-dashoffset="187"/>
<line x1="174.5" y1="639.4" x2="394.5" y2="657.9" stroke="#3f62b4" stroke-width="0.9" stroke-dasharray="0 14 9 16 6 22 11 9" stroke-dashoffset="187"/>
<line x1="174.5" y1="672.7" x2="394.5" y2="691.2" stroke="#d5361f" stroke-width="2.0"/>
<line x1="174.5" y1="672.7" x2="394.5" y2="691.2" stroke="#e9e4ee" stroke-width="0.9" stroke-dasharray="12 20 5 34 9 27" stroke-dashoffset="204"/>
<line x1="174.5" y1="672.7" x2="394.5" y2="691.2" stroke="#3f62b4" stroke-width="0.9" stroke-dasharray="0 14 9 16 6 22 11 9" stroke-dashoffset="204"/>
<line x1="174.5" y1="706" x2="394.5" y2="724.5" stroke="#d5361f" stroke-width="2.0"/>
<line x1="174.5" y1="706" x2="394.5" y2="724.5" stroke="#e9e4ee" stroke-width="0.9" stroke-dasharray="12 20 5 34 9 27" stroke-dashoffset="221"/>
<line x1="174.5" y1="706" x2="394.5" y2="724.5" stroke="#3f62b4" stroke-width="0.9" stroke-dasharray="0 14 9 16 6 22 11 9" stroke-dashoffset="221"/>
<line x1="174.5" y1="739.4" x2="394.5" y2="757.9" stroke="#d5361f" stroke-width="2.0"/>
<line x1="174.5" y1="739.4" x2="394.5" y2="757.9" stroke="#e9e4ee" stroke-width="0.9" stroke-dasharray="12 20 5 34 9 27" stroke-dashoffset="238"/>
<line x1="174.5" y1="739.4" x2="394.5" y2="757.9" stroke="#3f62b4" stroke-width="0.9" stroke-dasharray="0 14 9 16 6 22 11 9" stroke-dashoffset="238"/>
<line x1="174.5" y1="772.8" x2="394.5" y2="791.2" stroke="#d5361f" stroke-width="2.0"/>
<line x1="174.5" y1="772.8" x2="394.5" y2="791.2" stroke="#e9e4ee" stroke-width="0.9" stroke-dasharray="12 20 5 34 9 27" stroke-dashoffset="255"/>
<line x1="174.5" y1="772.8" x2="394.5" y2="791.2" stroke="#3f62b4" stroke-width="0.9" stroke-dasharray="0 14 9 16 6 22 11 9" stroke-dashoffset="255"/>
<line x1="174.5" y1="806.1" x2="394.5" y2="824.6" stroke="#d5361f" stroke-width="2.0"/>
<line x1="174.5" y1="806.1" x2="394.5" y2="824.6" stroke="#e9e4ee" stroke-width="0.9" stroke-dasharray="12 20 5 34 9 27" stroke-dashoffset="272"/>
<line x1="174.5" y1="806.1" x2="394.5" y2="824.6" stroke="#3f62b4" stroke-width="0.9" stroke-dasharray="0 14 9 16 6 22 11 9" stroke-dashoffset="272"/>
<line x1="174.5" y1="839.5" x2="394.5" y2="858" stroke="#d5361f" stroke-width="2.0"/>
<line x1="174.5" y1="839.5" x2="394.5" y2="858" stroke="#e9e4ee" stroke-width="0.9" stroke-dasharray="12 20 5 34 9 27" stroke-dashoffset="289"/>
<line x1="174.5" y1="839.5" x2="394.5" y2="858" stroke="#3f62b4" stroke-width="0.9" stroke-dasharray="0 14 9 16 6 22 11 9" stroke-dashoffset="289"/>
<line x1="174.5" y1="872.8" x2="394.5" y2="891.3" stroke="#d5361f" stroke-width="2.0"/>
<line x1="174.5" y1="872.8" x2="394.5" y2="891.3" stroke="#e9e4ee" stroke-width="0.9" stroke-dasharray="12 20 5 34 9 27" stroke-dashoffset="306"/>
<line x1="174.5" y1="872.8" x2="394.5" y2="891.3" stroke="#3f62b4" stroke-width="0.9" stroke-dasharray="0 14 9 16 6 22 11 9" stroke-dashoffset="306"/>
<line x1="174.5" y1="906.1" x2="394.5" y2="924.6" stroke="#d5361f" stroke-width="2.0"/>
<line x1="174.5" y1="906.1" x2="394.5" y2="924.6" stroke="#e9e4ee" stroke-width="0.9" stroke-dasharray="12 20 5 34 9 27" stroke-dashoffset="323"/>
<line x1="174.5" y1="906.1" x2="394.5" y2="924.6" stroke="#3f62b4" stroke-width="0.9" stroke-dasharray="0 14 9 16 6 22 11 9" stroke-dashoffset="323"/>
<line x1="174.5" y1="939.5" x2="394.5" y2="958" stroke="#d5361f" stroke-width="2.0"/>
<line x1="174.5" y1="939.5" x2="394.5" y2="958" stroke="#e9e4ee" stroke-width="0.9" stroke-dasharray="12 20 5 34 9 27" stroke-dashoffset="340"/>
<line x1="174.5" y1="939.5" x2="394.5" y2="958" stroke="#3f62b4" stroke-width="0.9" stroke-dasharray="0 14 9 16 6 22 11 9" stroke-dashoffset="340"/>
<line x1="174.5" y1="972.9" x2="394.5" y2="991.4" stroke="#d5361f" stroke-width="2.0"/>
<line x1="174.5" y1="972.9" x2="394.5" y2="991.4" stroke="#e9e4ee" stroke-width="0.9" stroke-dasharray="12 20 5 34 9 27" stroke-dashoffset="357"/>
<line x1="174.5" y1="972.9" x2="394.5" y2="991.4" stroke="#3f62b4" stroke-width="0.9" stroke-dasharray="0 14 9 16 6 22 11 9" stroke-dashoffset="357"/>
<line x1="174.5" y1="1006.2" x2="394.5" y2="1024.7" stroke="#d5361f" stroke-width="2.0"/>
<line x1="174.5" y1="1006.2" x2="394.5" y2="1024.7" stroke="#e9e4ee" stroke-width="0.9" stroke-dasharray="12 20 5 34 9 27" stroke-dashoffset="374"/>
<line x1="174.5" y1="1006.2" x2="394.5" y2="1024.7" stroke="#3f62b4" stroke-width="0.9" stroke-dasharray="0 14 9 16 6 22 11 9" stroke-dashoffset="374"/>
<line x1="174.5" y1="1039.6" x2="418" y2="1060" stroke="#d5361f" stroke-width="2.0"/>
<line x1="174.5" y1="1039.6" x2="418" y2="1060" stroke="#e9e4ee" stroke-width="0.9" stroke-dasharray="12 20 5 34 9 27" stroke-dashoffset="391"/>
<line x1="174.5" y1="1039.6" x2="418" y2="1060" stroke="#3f62b4" stroke-width="0.9" stroke-dasharray="0 14 9 16 6 22 11 9" stroke-dashoffset="391"/>
<line x1="174.5" y1="1072.9" x2="418" y2="1093.4" stroke="#d5361f" stroke-width="2.0"/>
<line x1="174.5" y1="1072.9" x2="418" y2="1093.4" stroke="#e9e4ee" stroke-width="0.9" stroke-dasharray="12 20 5 34 9 27" stroke-dashoffset="408"/>
<line x1="174.5" y1="1072.9" x2="418" y2="1093.4" stroke="#3f62b4" stroke-width="0.9" stroke-dasharray="0 14 9 16 6 22 11 9" stroke-dashoffset="408"/>
<line x1="174.5" y1="1106.2" x2="418" y2="1126.7" stroke="#d5361f" stroke-width="2.0"/>
<line x1="174.5" y1="1106.2" x2="418" y2="1126.7" stroke="#e9e4ee" stroke-width="0.9" stroke-dasharray="12 20 5 34 9 27" stroke-dashoffset="425"/>
<line x1="174.5" y1="1106.2" x2="418" y2="1126.7" stroke="#3f62b4" stroke-width="0.9" stroke-dasharray="0 14 9 16 6 22 11 9" stroke-dashoffset="425"/>
<line x1="174.5" y1="1139.6" x2="418" y2="1160.1" stroke="#d5361f" stroke-width="2.0"/>
<line x1="174.5" y1="1139.6" x2="418" y2="1160.1" stroke="#e9e4ee" stroke-width="0.9" stroke-dasharray="12 20 5 34 9 27" stroke-dashoffset="442"/>
<line x1="174.5" y1="1139.6" x2="418" y2="1160.1" stroke="#3f62b4" stroke-width="0.9" stroke-dasharray="0 14 9 16 6 22 11 9" stroke-dashoffset="442"/>
<line x1="174.5" y1="1173" x2="418" y2="1193.4" stroke="#d5361f" stroke-width="2.0"/>
<line x1="174.5" y1="1173" x2="418" y2="1193.4" stroke="#e9e4ee" stroke-width="0.9" stroke-dasharray="12 20 5 34 9 27" stroke-dashoffset="459"/>
<line x1="174.5" y1="1173" x2="418" y2="1193.4" stroke="#3f62b4" stroke-width="0.9" stroke-dasharray="0 14 9 16 6 22 11 9" stroke-dashoffset="459"/>
<polygon points="394.5,291 419.5,288.8 419.5,1055.8 394.5,1058.1" fill="#f98f00"/>
<polygon points="419.5,288.8 428.5,288 428.5,1055 419.5,1055.8" fill="#b6cde9"/>
<polygon points="428.5,288 438.5,287.1 438.5,1054.1 428.5,1055" fill="#f6ef00"/>
<polygon points="438.5,287.1 447.5,286.3 447.5,1053.3 438.5,1054.1" fill="#fbc800"/>
<polygon points="447.5,286.3 457,285.4 457,1052.5 447.5,1053.3" fill="#fbc000"/>
<polygon points="457,285.4 465,284.7 465,1051.8 457,1052.5" fill="#a9c1e5"/>
<polygon points="465,284.7 474,283.9 474,1050.9 465,1051.8" fill="#f6ef00"/>
<polygon points="474,283.9 483.5,283 483.5,1050.1 474,1050.9" fill="#fbd200"/>
<polygon points="483.5,283 486,282.8 486,1049.9 483.5,1050.1" fill="#1a2640"/>
<polygon points="486,282.8 519.5,279.8 519.5,1046.9 486,1049.9" fill="#fbc400"/>
<polygon points="519.5,279.8 527,279.2 527,1046.2 519.5,1046.9" fill="#94afdd"/>
<polygon points="527,279.2 540,278 540,1045.1 527,1046.2" fill="#fbc400"/>
<polygon points="407.5,291.5 419.5,290.4 419.5,305.4 407.5,306.5" fill="#fbab00"/>
<polygon points="428.5,289.6 438.5,288.7 438.5,303.7 428.5,304.6" fill="#fbdf00"/>
<polygon points="465,286.4 474,285.6 474,300.6 465,301.4" fill="#fbdf00"/>
<polygon points="486,284.5 497,283.5 497,297.8 486,298.8" fill="#fbd000"/>
<polygon points="509,282.4 519.5,281.5 519.5,312.2 509,313.1" fill="#fbba00"/>
<polygon points="498,298.4 509,297.4 509,313.1 498,314.1" fill="#fbba00"/>
<polygon points="519.5,283.2 527,282.5 527,294.2 519.5,294.8" fill="#86a3d6"/>
<polygon points="407.5,324.9 419.5,323.8 419.5,338.8 407.5,339.9" fill="#fbab00"/>
<polygon points="428.5,323 438.5,322.1 438.5,337.1 428.5,338" fill="#fbdf00"/>
<polygon points="465,319.7 474,318.9 474,333.9 465,334.7" fill="#fbdf00"/>
<polygon points="486,317.8 497,316.9 497,331.2 486,332.2" fill="#fbd000"/>
<polygon points="509,315.8 519.5,314.8 519.5,345.5 509,346.5" fill="#fbba00"/>
<polygon points="498,331.8 509,330.8 509,346.5 498,347.5" fill="#fbba00"/>
<polygon points="519.5,316.5 527,315.8 527,327.5 519.5,328.2" fill="#86a3d6"/>
<polygon points="407.5,358.2 419.5,357.1 419.5,372.1 407.5,373.2" fill="#fbab00"/>
<polygon points="428.5,356.3 438.5,355.4 438.5,370.4 428.5,371.3" fill="#fbdf00"/>
<polygon points="465,353.1 474,352.3 474,367.3 465,368.1" fill="#fbdf00"/>
<polygon points="486,351.2 497,350.2 497,364.5 486,365.5" fill="#fbd000"/>
<polygon points="509,349.1 519.5,348.2 519.5,378.9 509,379.8" fill="#fbba00"/>
<polygon points="498,365.1 509,364.1 509,379.8 498,380.8" fill="#fbba00"/>
<polygon points="519.5,349.9 527,349.2 527,360.9 519.5,361.5" fill="#86a3d6"/>
<polygon points="407.5,391.6 419.5,390.5 419.5,405.5 407.5,406.6" fill="#fbab00"/>
<polygon points="428.5,389.7 438.5,388.8 438.5,403.8 428.5,404.7" fill="#fbdf00"/>
<polygon points="465,386.4 474,385.6 474,400.6 465,401.4" fill="#fbdf00"/>
<polygon points="486,384.5 497,383.6 497,397.9 486,398.9" fill="#fbd000"/>
<polygon points="509,382.5 519.5,381.5 519.5,412.2 509,413.2" fill="#fbba00"/>
<polygon points="498,398.5 509,397.5 509,413.2 498,414.2" fill="#fbba00"/>
<polygon points="519.5,383.2 527,382.5 527,394.2 519.5,394.9" fill="#86a3d6"/>
<polygon points="407.5,424.9 419.5,423.8 419.5,438.8 407.5,439.9" fill="#fbab00"/>
<polygon points="428.5,423 438.5,422.1 438.5,437.1 428.5,438" fill="#fbdf00"/>
<polygon points="465,419.8 474,419 474,434 465,434.8" fill="#fbdf00"/>
<polygon points="486,417.9 497,416.9 497,431.2 486,432.2" fill="#fbd000"/>
<polygon points="509,415.8 519.5,414.9 519.5,445.6 509,446.5" fill="#fbba00"/>
<polygon points="498,431.8 509,430.8 509,446.5 498,447.5" fill="#fbba00"/>
<polygon points="519.5,416.6 527,415.9 527,427.6 519.5,428.2" fill="#86a3d6"/>
<polygon points="407.5,458.3 419.5,457.2 419.5,472.2 407.5,473.3" fill="#fbab00"/>
<polygon points="428.5,456.4 438.5,455.5 438.5,470.5 428.5,471.4" fill="#fbdf00"/>
<polygon points="465,453.1 474,452.3 474,467.3 465,468.1" fill="#fbdf00"/>
<polygon points="486,451.2 497,450.3 497,464.6 486,465.6" fill="#fbd000"/>
<polygon points="509,449.2 519.5,448.2 519.5,478.9 509,479.9" fill="#fbba00"/>
<polygon points="498,465.2 509,464.2 509,479.9 498,480.9" fill="#fbba00"/>
<polygon points="519.5,449.9 527,449.2 527,460.9 519.5,461.6" fill="#86a3d6"/>
<polygon points="407.5,491.6 419.5,490.5 419.5,505.5 407.5,506.6" fill="#fbab00"/>
<polygon points="428.5,489.7 438.5,488.8 438.5,503.8 428.5,504.7" fill="#fbdf00"/>
<polygon points="465,486.5 474,485.7 474,500.7 465,501.5" fill="#fbdf00"/>
<polygon points="486,484.6 497,483.6 497,497.9 486,498.9" fill="#fbd000"/>
<polygon points="509,482.5 519.5,481.6 519.5,512.3 509,513.2" fill="#fbba00"/>
<polygon points="498,498.5 509,497.5 509,513.2 498,514.2" fill="#fbba00"/>
<polygon points="519.5,483.3 527,482.6 527,494.3 519.5,494.9" fill="#86a3d6"/>
<polygon points="407.5,525 419.5,523.9 419.5,538.9 407.5,540" fill="#fbab00"/>
<polygon points="428.5,523.1 438.5,522.2 438.5,537.2 428.5,538.1" fill="#fbdf00"/>
<polygon points="465,519.8 474,519 474,534 465,534.8" fill="#fbdf00"/>
<polygon points="486,517.9 497,517 497,531.3 486,532.3" fill="#fbd000"/>
<polygon points="509,515.9 519.5,514.9 519.5,545.6 509,546.6" fill="#fbba00"/>
<polygon points="498,531.9 509,530.9 509,546.6 498,547.6" fill="#fbba00"/>
<polygon points="519.5,516.6 527,515.9 527,527.6 519.5,528.3" fill="#86a3d6"/>
<polygon points="407.5,558.3 419.5,557.2 419.5,572.2 407.5,573.3" fill="#fbab00"/>
<polygon points="428.5,556.4 438.5,555.5 438.5,570.5 428.5,571.4" fill="#fbdf00"/>
<polygon points="465,553.2 474,552.4 474,567.4 465,568.2" fill="#fbdf00"/>
<polygon points="486,551.3 497,550.3 497,564.6 486,565.6" fill="#fbd000"/>
<polygon points="509,549.2 519.5,548.3 519.5,579 509,579.9" fill="#fbba00"/>
<polygon points="498,565.2 509,564.2 509,579.9 498,580.9" fill="#fbba00"/>
<polygon points="519.5,550 527,549.3 527,561 519.5,561.6" fill="#86a3d6"/>
<polygon points="407.5,591.7 419.5,590.6 419.5,605.6 407.5,606.7" fill="#fbab00"/>
<polygon points="428.5,589.8 438.5,588.9 438.5,603.9 428.5,604.8" fill="#fbdf00"/>
<polygon points="465,586.5 474,585.7 474,600.7 465,601.5" fill="#fbdf00"/>
<polygon points="486,584.6 497,583.7 497,598 486,599" fill="#fbd000"/>
<polygon points="509,582.6 519.5,581.6 519.5,612.3 509,613.3" fill="#fbba00"/>
<polygon points="498,598.6 509,597.6 509,613.3 498,614.3" fill="#fbba00"/>
<polygon points="519.5,583.3 527,582.6 527,594.3 519.5,595" fill="#86a3d6"/>
<polygon points="407.5,625 419.5,623.9 419.5,638.9 407.5,640" fill="#fbab00"/>
<polygon points="428.5,623.1 438.5,622.2 438.5,637.2 428.5,638.1" fill="#fbdf00"/>
<polygon points="465,619.9 474,619.1 474,634.1 465,634.9" fill="#fbdf00"/>
<polygon points="486,618 497,617 497,631.3 486,632.3" fill="#fbd000"/>
<polygon points="509,615.9 519.5,615 519.5,645.7 509,646.6" fill="#fbba00"/>
<polygon points="498,631.9 509,630.9 509,646.6 498,647.6" fill="#fbba00"/>
<polygon points="519.5,616.7 527,616 527,627.7 519.5,628.3" fill="#86a3d6"/>
<polygon points="407.5,658.4 419.5,657.3 419.5,672.3 407.5,673.4" fill="#fbab00"/>
<polygon points="428.5,656.5 438.5,655.6 438.5,670.6 428.5,671.5" fill="#fbdf00"/>
<polygon points="465,653.2 474,652.4 474,667.4 465,668.2" fill="#fbdf00"/>
<polygon points="486,651.3 497,650.4 497,664.7 486,665.7" fill="#fbd000"/>
<polygon points="509,649.3 519.5,648.3 519.5,679 509,680" fill="#fbba00"/>
<polygon points="498,665.3 509,664.3 509,680 498,681" fill="#fbba00"/>
<polygon points="519.5,650 527,649.3 527,661 519.5,661.7" fill="#86a3d6"/>
<polygon points="407.5,691.7 419.5,690.6 419.5,705.6 407.5,706.7" fill="#fbab00"/>
<polygon points="428.5,689.8 438.5,688.9 438.5,703.9 428.5,704.8" fill="#fbdf00"/>
<polygon points="465,686.6 474,685.8 474,700.8 465,701.6" fill="#fbdf00"/>
<polygon points="486,684.7 497,683.7 497,698 486,699" fill="#fbd000"/>
<polygon points="509,682.6 519.5,681.7 519.5,712.4 509,713.3" fill="#fbba00"/>
<polygon points="498,698.6 509,697.6 509,713.3 498,714.3" fill="#fbba00"/>
<polygon points="519.5,683.4 527,682.7 527,694.4 519.5,695" fill="#86a3d6"/>
<polygon points="407.5,725.1 419.5,724 419.5,739 407.5,740.1" fill="#fbab00"/>
<polygon points="428.5,723.2 438.5,722.3 438.5,737.3 428.5,738.2" fill="#fbdf00"/>
<polygon points="465,719.9 474,719.1 474,734.1 465,734.9" fill="#fbdf00"/>
<polygon points="486,718 497,717.1 497,731.4 486,732.4" fill="#fbd000"/>
<polygon points="509,716 519.5,715 519.5,745.7 509,746.7" fill="#fbba00"/>
<polygon points="498,732 509,731 509,746.7 498,747.7" fill="#fbba00"/>
<polygon points="519.5,716.7 527,716 527,727.7 519.5,728.4" fill="#86a3d6"/>
<polygon points="407.5,758.4 419.5,757.3 419.5,772.3 407.5,773.4" fill="#fbab00"/>
<polygon points="428.5,756.5 438.5,755.6 438.5,770.6 428.5,771.5" fill="#fbdf00"/>
<polygon points="465,753.3 474,752.5 474,767.5 465,768.3" fill="#fbdf00"/>
<polygon points="486,751.4 497,750.4 497,764.7 486,765.7" fill="#fbd000"/>
<polygon points="509,749.3 519.5,748.4 519.5,779.1 509,780" fill="#fbba00"/>
<polygon points="498,765.3 509,764.3 509,780 498,781" fill="#fbba00"/>
<polygon points="519.5,750.1 527,749.4 527,761.1 519.5,761.7" fill="#86a3d6"/>
<polygon points="407.5,791.8 419.5,790.7 419.5,805.7 407.5,806.8" fill="#fbab00"/>
<polygon points="428.5,789.9 438.5,789 438.5,804 428.5,804.9" fill="#fbdf00"/>
<polygon points="465,786.6 474,785.8 474,800.8 465,801.6" fill="#fbdf00"/>
<polygon points="486,784.7 497,783.8 497,798.1 486,799.1" fill="#fbd000"/>
<polygon points="509,782.7 519.5,781.7 519.5,812.4 509,813.4" fill="#fbba00"/>
<polygon points="498,798.7 509,797.7 509,813.4 498,814.4" fill="#fbba00"/>
<polygon points="519.5,783.4 527,782.7 527,794.4 519.5,795.1" fill="#86a3d6"/>
<polygon points="407.5,825.1 419.5,824 419.5,839 407.5,840.1" fill="#fbab00"/>
<polygon points="428.5,823.2 438.5,822.3 438.5,837.3 428.5,838.2" fill="#fbdf00"/>
<polygon points="465,820 474,819.2 474,834.2 465,835" fill="#fbdf00"/>
<polygon points="486,818.1 497,817.1 497,831.4 486,832.4" fill="#fbd000"/>
<polygon points="509,816 519.5,815.1 519.5,845.8 509,846.7" fill="#fbba00"/>
<polygon points="498,832 509,831 509,846.7 498,847.7" fill="#fbba00"/>
<polygon points="519.5,816.8 527,816.1 527,827.8 519.5,828.4" fill="#86a3d6"/>
<polygon points="407.5,858.5 419.5,857.4 419.5,872.4 407.5,873.5" fill="#fbab00"/>
<polygon points="428.5,856.6 438.5,855.7 438.5,870.7 428.5,871.6" fill="#fbdf00"/>
<polygon points="465,853.3 474,852.5 474,867.5 465,868.3" fill="#fbdf00"/>
<polygon points="486,851.4 497,850.5 497,864.8 486,865.8" fill="#fbd000"/>
<polygon points="509,849.4 519.5,848.4 519.5,879.1 509,880.1" fill="#fbba00"/>
<polygon points="498,865.4 509,864.4 509,880.1 498,881.1" fill="#fbba00"/>
<polygon points="519.5,850.1 527,849.4 527,861.1 519.5,861.8" fill="#86a3d6"/>
<polygon points="407.5,891.8 419.5,890.7 419.5,905.7 407.5,906.8" fill="#fbab00"/>
<polygon points="428.5,889.9 438.5,889 438.5,904 428.5,904.9" fill="#fbdf00"/>
<polygon points="465,886.7 474,885.9 474,900.9 465,901.7" fill="#fbdf00"/>
<polygon points="486,884.8 497,883.8 497,898.1 486,899.1" fill="#fbd000"/>
<polygon points="509,882.7 519.5,881.8 519.5,912.5 509,913.4" fill="#fbba00"/>
<polygon points="498,898.7 509,897.7 509,913.4 498,914.4" fill="#fbba00"/>
<polygon points="519.5,883.5 527,882.8 527,894.5 519.5,895.1" fill="#86a3d6"/>
<polygon points="407.5,925.2 419.5,924.1 419.5,939.1 407.5,940.2" fill="#fbab00"/>
<polygon points="428.5,923.3 438.5,922.4 438.5,937.4 428.5,938.3" fill="#fbdf00"/>
<polygon points="465,920 474,919.2 474,934.2 465,935" fill="#fbdf00"/>
<polygon points="486,918.1 497,917.2 497,931.5 486,932.5" fill="#fbd000"/>
<polygon points="509,916.1 519.5,915.1 519.5,945.8 509,946.8" fill="#fbba00"/>
<polygon points="498,932.1 509,931.1 509,946.8 498,947.8" fill="#fbba00"/>
<polygon points="519.5,916.8 527,916.1 527,927.8 519.5,928.5" fill="#86a3d6"/>
<polygon points="407.5,958.5 419.5,957.4 419.5,972.4 407.5,973.5" fill="#fbab00"/>
<polygon points="428.5,956.6 438.5,955.7 438.5,970.7 428.5,971.6" fill="#fbdf00"/>
<polygon points="465,953.4 474,952.6 474,967.6 465,968.4" fill="#fbdf00"/>
<polygon points="486,951.5 497,950.5 497,964.8 486,965.8" fill="#fbd000"/>
<polygon points="509,949.4 519.5,948.5 519.5,979.2 509,980.1" fill="#fbba00"/>
<polygon points="498,965.4 509,964.4 509,980.1 498,981.1" fill="#fbba00"/>
<polygon points="519.5,950.2 527,949.5 527,961.2 519.5,961.8" fill="#86a3d6"/>
<polygon points="407.5,991.9 419.5,990.8 419.5,1005.8 407.5,1006.9" fill="#fbab00"/>
<polygon points="428.5,990 438.5,989.1 438.5,1004.1 428.5,1005" fill="#fbdf00"/>
<polygon points="465,986.7 474,985.9 474,1000.9 465,1001.7" fill="#fbdf00"/>
<polygon points="486,984.8 497,983.9 497,998.2 486,999.2" fill="#fbd000"/>
<polygon points="509,982.8 519.5,981.8 519.5,1012.5 509,1013.5" fill="#fbba00"/>
<polygon points="498,998.8 509,997.8 509,1013.5 498,1014.5" fill="#fbba00"/>
<polygon points="519.5,983.5 527,982.8 527,994.5 519.5,995.2" fill="#86a3d6"/>
<polygon points="407.5,1025.2 419.5,1024.1 419.5,1039.1 407.5,1040.2" fill="#fbab00"/>
<polygon points="428.5,1023.3 438.5,1022.4 438.5,1037.4 428.5,1038.3" fill="#fbdf00"/>
<polygon points="465,1020.1 474,1019.3 474,1034.3 465,1035.1" fill="#fbdf00"/>
<polygon points="486,1018.2 497,1017.2 497,1031.5 486,1032.5" fill="#fbd000"/>
<polygon points="509,1016.1 519.5,1015.2 519.5,1045.9 509,1046.8" fill="#fbba00"/>
<polygon points="498,1032.1 509,1031.1 509,1046.8 498,1047.8" fill="#fbba00"/>
<polygon points="519.5,1016.9 527,1016.2 527,1027.9 519.5,1028.5" fill="#86a3d6"/>
<polygon points="419.5,288.8 457,285.4 457,300.4 419.5,303.8" fill="#b6cde9"/>
<polygon points="457,285.4 474,283.9 474,317.2 457,318.8" fill="#b6cde9"/>
<polygon points="457,300.4 464,299.8 464,316.5 457,317.1" fill="#a3bce2"/>
<polygon points="464.6,618.2 514.5,613.8 514.5,646.1 464.6,650.6" fill="#fbc400"/>
<polygon points="464.6,619.2 474,618.4 474,634.1 464.6,634.9" fill="#fbdf00"/>
<polygon points="464.6,634.9 474,634.1 474,649.7 464.6,650.6" fill="#f6ef00"/>
<polygon points="474,618.4 486,617.3 486,631.3 474,632.4" fill="#fbd000"/>
<polygon points="497,616.3 514.5,614.8 514.5,632.1 497,633.7" fill="#fbb600"/>
<polygon points="505,633 514.5,632.1 514.5,646.1 505,647" fill="#fbb600"/>
<polygon points="449,619.6 450.3,619.5 450.3,652.9 449,653" fill="#1a2640"/>
<polygon points="456.8,618.9 458.4,618.8 458.4,652.1 456.8,652.3" fill="#1a2640"/>
<polygon points="458.4,618.8 463,618.4 463,651.7 458.4,652.1" fill="#b6cde9"/>
<polygon points="463,618.4 464.6,618.2 464.6,651.6 463,651.7" fill="#1a2640"/>
<polygon points="514.5,612.1 528.5,610.9 528.5,643.5 514.5,644.8" fill="#c4dff1"/>
<polygon points="516,630.3 527,629.3 527,643.7 516,644.7" fill="#fbc400"/>
<polygon points="528.5,612.5 546,611 546,642.6 528.5,644.2" fill="#fbc400"/>
<polygon points="536,612.9 546,612 546,627.6 536,628.5" fill="#fbb600"/>
<polygon points="420,657.6 457,654.3 457,671.6 420,674.9" fill="#a9c4e6"/>
<polygon points="457.6,652.2 474.3,650.7 474.3,667.4 457.6,668.9" fill="#5578bf"/>
<polygon points="457.6,668.9 484,666.5 484,682.2 457.6,684.6" fill="#a9c4e6"/>
<polygon points="487.4,664.6 498.8,663.5 498.8,680.2 487.4,681.2" fill="#c4dff1"/>
<line x1="394.5" y1="324.4" x2="540" y2="311.4" stroke="#4a6fc0" stroke-width="1.6"/>
<line x1="394.5" y1="324.4" x2="540" y2="311.4" stroke="#1a2640" stroke-width="1.6" stroke-dasharray="9 16 14 21 7 12" stroke-dashoffset="13"/>
<line x1="394.5" y1="357.7" x2="540" y2="344.7" stroke="#4a6fc0" stroke-width="1.6"/>
<line x1="394.5" y1="357.7" x2="540" y2="344.7" stroke="#1a2640" stroke-width="1.6" stroke-dasharray="9 16 14 21 7 12" stroke-dashoffset="26"/>
<line x1="394.5" y1="391.1" x2="540" y2="378.1" stroke="#4a6fc0" stroke-width="1.6"/>
<line x1="394.5" y1="391.1" x2="540" y2="378.1" stroke="#1a2640" stroke-width="1.6" stroke-dasharray="9 16 14 21 7 12" stroke-dashoffset="39"/>
<line x1="394.5" y1="424.4" x2="540" y2="411.4" stroke="#4a6fc0" stroke-width="1.6"/>
<line x1="394.5" y1="424.4" x2="540" y2="411.4" stroke="#1a2640" stroke-width="1.6" stroke-dasharray="9 16 14 21 7 12" stroke-dashoffset="52"/>
<line x1="394.5" y1="457.8" x2="540" y2="444.8" stroke="#4a6fc0" stroke-width="1.6"/>
<line x1="394.5" y1="457.8" x2="540" y2="444.8" stroke="#1a2640" stroke-width="1.6" stroke-dasharray="9 16 14 21 7 12" stroke-dashoffset="65"/>
<line x1="394.5" y1="491.1" x2="540" y2="478.1" stroke="#4a6fc0" stroke-width="1.6"/>
<line x1="394.5" y1="491.1" x2="540" y2="478.1" stroke="#1a2640" stroke-width="1.6" stroke-dasharray="9 16 14 21 7 12" stroke-dashoffset="78"/>
<line x1="394.5" y1="524.5" x2="540" y2="511.5" stroke="#4a6fc0" stroke-width="1.6"/>
<line x1="394.5" y1="524.5" x2="540" y2="511.5" stroke="#1a2640" stroke-width="1.6" stroke-dasharray="9 16 14 21 7 12" stroke-dashoffset="91"/>
<line x1="394.5" y1="557.8" x2="540" y2="544.8" stroke="#4a6fc0" stroke-width="1.6"/>
<line x1="394.5" y1="557.8" x2="540" y2="544.8" stroke="#1a2640" stroke-width="1.6" stroke-dasharray="9 16 14 21 7 12" stroke-dashoffset="104"/>
<line x1="394.5" y1="591.2" x2="540" y2="578.2" stroke="#4a6fc0" stroke-width="1.6"/>
<line x1="394.5" y1="591.2" x2="540" y2="578.2" stroke="#1a2640" stroke-width="1.6" stroke-dasharray="9 16 14 21 7 12" stroke-dashoffset="117"/>
<line x1="394.5" y1="624.5" x2="540" y2="611.5" stroke="#4a6fc0" stroke-width="1.6"/>
<line x1="394.5" y1="624.5" x2="540" y2="611.5" stroke="#1a2640" stroke-width="1.6" stroke-dasharray="9 16 14 21 7 12" stroke-dashoffset="130"/>
<line x1="394.5" y1="657.9" x2="540" y2="644.9" stroke="#4a6fc0" stroke-width="1.6"/>
<line x1="394.5" y1="657.9" x2="540" y2="644.9" stroke="#1a2640" stroke-width="1.6" stroke-dasharray="9 16 14 21 7 12" stroke-dashoffset="143"/>
<line x1="394.5" y1="691.2" x2="540" y2="678.2" stroke="#4a6fc0" stroke-width="1.6"/>
<line x1="394.5" y1="691.2" x2="540" y2="678.2" stroke="#1a2640" stroke-width="1.6" stroke-dasharray="9 16 14 21 7 12" stroke-dashoffset="156"/>
<line x1="394.5" y1="724.5" x2="540" y2="711.5" stroke="#4a6fc0" stroke-width="1.6"/>
<line x1="394.5" y1="724.5" x2="540" y2="711.5" stroke="#1a2640" stroke-width="1.6" stroke-dasharray="9 16 14 21 7 12" stroke-dashoffset="169"/>
<line x1="394.5" y1="757.9" x2="540" y2="744.9" stroke="#4a6fc0" stroke-width="1.6"/>
<line x1="394.5" y1="757.9" x2="540" y2="744.9" stroke="#1a2640" stroke-width="1.6" stroke-dasharray="9 16 14 21 7 12" stroke-dashoffset="182"/>
<line x1="394.5" y1="791.2" x2="540" y2="778.2" stroke="#4a6fc0" stroke-width="1.6"/>
<line x1="394.5" y1="791.2" x2="540" y2="778.2" stroke="#1a2640" stroke-width="1.6" stroke-dasharray="9 16 14 21 7 12" stroke-dashoffset="195"/>
<line x1="394.5" y1="824.6" x2="540" y2="811.6" stroke="#4a6fc0" stroke-width="1.6"/>
<line x1="394.5" y1="824.6" x2="540" y2="811.6" stroke="#1a2640" stroke-width="1.6" stroke-dasharray="9 16 14 21 7 12" stroke-dashoffset="208"/>
<line x1="394.5" y1="858" x2="540" y2="845" stroke="#4a6fc0" stroke-width="1.6"/>
<line x1="394.5" y1="858" x2="540" y2="845" stroke="#1a2640" stroke-width="1.6" stroke-dasharray="9 16 14 21 7 12" stroke-dashoffset="221"/>
<line x1="394.5" y1="891.3" x2="540" y2="878.3" stroke="#4a6fc0" stroke-width="1.6"/>
<line x1="394.5" y1="891.3" x2="540" y2="878.3" stroke="#1a2640" stroke-width="1.6" stroke-dasharray="9 16 14 21 7 12" stroke-dashoffset="234"/>
<line x1="394.5" y1="924.6" x2="540" y2="911.6" stroke="#4a6fc0" stroke-width="1.6"/>
<line x1="394.5" y1="924.6" x2="540" y2="911.6" stroke="#1a2640" stroke-width="1.6" stroke-dasharray="9 16 14 21 7 12" stroke-dashoffset="247"/>
<line x1="394.5" y1="958" x2="540" y2="945" stroke="#4a6fc0" stroke-width="1.6"/>
<line x1="394.5" y1="958" x2="540" y2="945" stroke="#1a2640" stroke-width="1.6" stroke-dasharray="9 16 14 21 7 12" stroke-dashoffset="260"/>
<line x1="394.5" y1="991.4" x2="540" y2="978.4" stroke="#4a6fc0" stroke-width="1.6"/>
<line x1="394.5" y1="991.4" x2="540" y2="978.4" stroke="#1a2640" stroke-width="1.6" stroke-dasharray="9 16 14 21 7 12" stroke-dashoffset="273"/>
<line x1="394.5" y1="1024.7" x2="540" y2="1011.7" stroke="#4a6fc0" stroke-width="1.6"/>
<line x1="394.5" y1="1024.7" x2="540" y2="1011.7" stroke="#1a2640" stroke-width="1.6" stroke-dasharray="9 16 14 21 7 12" stroke-dashoffset="286"/>
<line x1="528" y1="612.6" x2="546" y2="611" stroke="#3f5fa8" stroke-width="1.4"/>
<line x1="528" y1="644.9" x2="546" y2="643.3" stroke="#3f5fa8" stroke-width="1.4"/>
<polygon points="394.5,1057.5 419.8,1055.3 419,1061 394.5,1059" fill="#5578bf"/>
<polygon points="416,1057 419,1053 540,1046 552,1047.5 576,1054.5 563.5,1055.5 493.6,1061 476,1064.8 448,1062 441,1061.5" fill="#5578bf"/>
<polygon points="416,1056.5 441,1059 441,1062 416,1060" fill="#1a2640"/>
<polygon points="517,1049 552,1050.5 556,1054 545,1058 517,1059.5" fill="#1a2640"/>
<polygon points="532.7,1047 552,1047.5 552,1051.5 532.7,1051.5" fill="#fbc400"/>
<polygon points="430,1055 517,1049 517,1052 430,1058" fill="#6a8bcb"/>
<polygon points="417.8,1061.8 437.5,1060.5 437.5,1228.8 417.8,1230.1" fill="#f98f00"/>
<polygon points="417.8,1063.1 437.5,1061.8 437.5,1077 417.8,1078.3" fill="#fbc400"/>
<polygon points="417.8,1096.1 437.5,1094.8 437.5,1110 417.8,1111.3" fill="#fbc400"/>
<polygon points="417.8,1129.1 437.5,1127.8 437.5,1143 417.8,1144.3" fill="#fbc400"/>
<polygon points="417.8,1162.1 437.5,1160.8 437.5,1176 417.8,1177.3" fill="#fbc400"/>
<polygon points="417.8,1195.1 437.5,1193.8 437.5,1209 417.8,1210.3" fill="#fbc400"/>
<polygon points="437.5,1060.5 440.8,1060.3 440.8,1228.6 437.5,1228.8" fill="#b6cde9"/>
<polygon points="437.5,1077 440.8,1076.8 440.8,1093.3 437.5,1093.5" fill="#f6ef00"/>
<polygon points="437.5,1110 440.8,1109.8 440.8,1126.3 437.5,1126.5" fill="#f6ef00"/>
<polygon points="437.5,1143 440.8,1142.8 440.8,1159.3 437.5,1159.5" fill="#f6ef00"/>
<polygon points="437.5,1176 440.8,1175.8 440.8,1192.3 437.5,1192.5" fill="#f6ef00"/>
<polygon points="437.5,1209 440.8,1208.8 440.8,1225.3 437.5,1225.5" fill="#f6ef00"/>
<polygon points="440.8,1060.8 448,1061.6 448,1229.2 440.8,1228.5" fill="#5a1c00"/>
<polygon points="448,1061.6 476,1064.6 476,1232.3 448,1229.2" fill="#4e0d00"/>
<line x1="441.5" y1="1060.9" x2="441.5" y2="1223.6" stroke="#e07010" stroke-width="1"/>
<line x1="447.6" y1="1061.5" x2="447.6" y2="1224.2" stroke="#e07010" stroke-width="1"/>
<line x1="441" y1="1077.4" x2="448" y2="1078.2" stroke="#e07010" stroke-width="1"/>
<line x1="441" y1="1110.6" x2="448" y2="1111.4" stroke="#e07010" stroke-width="1"/>
<line x1="441" y1="1143.8" x2="448" y2="1144.6" stroke="#e07010" stroke-width="1"/>
<line x1="441" y1="1177" x2="448" y2="1177.8" stroke="#e07010" stroke-width="1"/>
<line x1="441" y1="1210.2" x2="448" y2="1211" stroke="#e07010" stroke-width="1"/>
<polygon points="382,1124.5 440.8,1129 440.8,1162.5 382,1157.5" fill="#5578bf"/>
<polygon points="382,1140.5 391,1141 391,1154 382,1153.5" fill="#f98f00"/>
<polygon points="418,1127 440.8,1128.5 440.8,1148 418,1148" fill="#1a2640"/>
<polygon points="417,1152.5 440.8,1153 440.8,1161.5 417,1160" fill="#1a2640"/>
<line x1="392" y1="1152" x2="418" y2="1150" stroke="#3d5ca6" stroke-width="1.2"/>
<line x1="402" y1="1126" x2="402" y2="1152" stroke="#4a6ab3" stroke-width="1"/>
<polygon points="476,1064.6 493.6,1062.6 493.6,1229.1 476,1231.1" fill="#fbc400"/>
<polygon points="493.6,1062.6 560.6,1055 560.6,1221.5 493.6,1229.1" fill="#fbc400"/>
<polygon points="493.6,1063.6 560.6,1056 560.6,1071.7 493.6,1079.3" fill="#fbdf00"/>
<polygon points="484,1064.7 493.6,1063.6 493.6,1080.9 484,1082" fill="#fbcb00"/>
<polygon points="500,1078.5 560.6,1071.7 560.6,1075.6 500,1082.5" fill="#fbd000"/>
<polygon points="493.6,1096.9 560.6,1089.3 560.6,1105 493.6,1112.6" fill="#fbdf00"/>
<polygon points="484,1098 493.6,1096.9 493.6,1114.2 484,1115.3" fill="#fbcb00"/>
<polygon points="500,1111.8 560.6,1105 560.6,1108.9 500,1115.8" fill="#fbd000"/>
<polygon points="493.6,1130.2 560.6,1122.6 560.6,1138.2 493.6,1145.9" fill="#fbdf00"/>
<polygon points="484,1131.3 493.6,1130.2 493.6,1147.5 484,1148.6" fill="#fbcb00"/>
<polygon points="500,1145.1 560.6,1138.2 560.6,1142.2 500,1149.1" fill="#fbd000"/>
<polygon points="493.6,1163.5 560.6,1155.9 560.6,1171.5 493.6,1179.2" fill="#fbdf00"/>
<polygon points="484,1164.6 493.6,1163.5 493.6,1180.8 484,1181.9" fill="#fbcb00"/>
<polygon points="500,1178.4 560.6,1171.5 560.6,1175.5 500,1182.4" fill="#fbd000"/>
<polygon points="493.6,1196.8 560.6,1189.2 560.6,1204.8 493.6,1212.5" fill="#fbdf00"/>
<polygon points="484,1197.9 493.6,1196.8 493.6,1214.1 484,1215.2" fill="#fbcb00"/>
<polygon points="500,1211.7 560.6,1204.8 560.6,1208.8 500,1215.7" fill="#fbd000"/>
<polygon points="560.6,1055 563.5,1054.7 563.5,1221.2 560.6,1221.5" fill="#1a2640"/>
<polygon points="563.5,1054 576,1052.6 576,1219.1 563.5,1220.5" fill="#fbc400"/>
<polygon points="563.5,1071.3 576,1069.9 576,1085.6 563.5,1087" fill="#fbb800"/>
<polygon points="563.5,1104.6 576,1103.2 576,1118.9 563.5,1120.3" fill="#fbb800"/>
<polygon points="563.5,1137.9 576,1136.5 576,1152.2 563.5,1153.6" fill="#fbb800"/>
<polygon points="563.5,1171.2 576,1169.8 576,1185.5 563.5,1186.9" fill="#fbb800"/>
<polygon points="563.5,1204.5 576,1203.1 576,1218.8 563.5,1220.2" fill="#fbb800"/>
<line x1="440.8" y1="1094" x2="476" y2="1097.8" stroke="#e2260f" stroke-width="1.6"/>
<line x1="440.8" y1="1094" x2="476" y2="1097.8" stroke="#5f7fc4" stroke-width="1.2" stroke-dasharray="6 13"/>
<line x1="418.7" y1="1094.7" x2="440.8" y2="1093.3" stroke="#3f5fa8" stroke-width="1.5"/>
<line x1="476" y1="1097.9" x2="576" y2="1086.6" stroke="#3f5fa8" stroke-width="1.5"/>
<line x1="476" y1="1097.9" x2="576" y2="1086.6" stroke="#1a2640" stroke-width="1.5" stroke-dasharray="16 11 9 14"/>
<line x1="440.8" y1="1127.2" x2="476" y2="1131" stroke="#e2260f" stroke-width="1.6"/>
<line x1="440.8" y1="1127.2" x2="476" y2="1131" stroke="#5f7fc4" stroke-width="1.2" stroke-dasharray="6 13"/>
<line x1="418.7" y1="1127.7" x2="440.8" y2="1126.3" stroke="#3f5fa8" stroke-width="1.5"/>
<line x1="476" y1="1131.2" x2="576" y2="1119.9" stroke="#3f5fa8" stroke-width="1.5"/>
<line x1="476" y1="1131.2" x2="576" y2="1119.9" stroke="#1a2640" stroke-width="1.5" stroke-dasharray="16 11 9 14"/>
<line x1="440.8" y1="1160.4" x2="476" y2="1164.2" stroke="#e2260f" stroke-width="1.6"/>
<line x1="440.8" y1="1160.4" x2="476" y2="1164.2" stroke="#5f7fc4" stroke-width="1.2" stroke-dasharray="6 13"/>
<line x1="418.7" y1="1160.7" x2="440.8" y2="1159.3" stroke="#3f5fa8" stroke-width="1.5"/>
<line x1="476" y1="1164.5" x2="576" y2="1153.2" stroke="#3f5fa8" stroke-width="1.5"/>
<line x1="476" y1="1164.5" x2="576" y2="1153.2" stroke="#1a2640" stroke-width="1.5" stroke-dasharray="16 11 9 14"/>
<line x1="440.8" y1="1193.6" x2="476" y2="1197.4" stroke="#e2260f" stroke-width="1.6"/>
<line x1="440.8" y1="1193.6" x2="476" y2="1197.4" stroke="#5f7fc4" stroke-width="1.2" stroke-dasharray="6 13"/>
<line x1="418.7" y1="1193.7" x2="440.8" y2="1192.3" stroke="#3f5fa8" stroke-width="1.5"/>
<line x1="476" y1="1197.8" x2="576" y2="1186.5" stroke="#3f5fa8" stroke-width="1.5"/>
<line x1="476" y1="1197.8" x2="576" y2="1186.5" stroke="#1a2640" stroke-width="1.5" stroke-dasharray="16 11 9 14"/>
<line x1="493.6" y1="1062.6" x2="493.6" y2="1225.8" stroke="#5f7fc4" stroke-width="1.2"/>
<line x1="440.8" y1="1060.8" x2="476" y2="1064.6" stroke="#e2260f" stroke-width="1.2"/>
<polygon points="191,1209.5 427,1230.5 427,1241.5 191,1223" fill="#1a2640"/>
<polygon points="191,1209.5 427,1230.5 427,1233 191,1212" fill="#4a6296"/>
<polygon points="191,1223 427,1241.5 427,1269 191,1248" fill="#4e0d00"/>
<line x1="191" y1="1223" x2="427" y2="1241.5" stroke="#26324d" stroke-width="1"/>
<line x1="191" y1="1248" x2="427" y2="1269" stroke="#e2260f" stroke-width="1"/>
<polygon points="427,1230.5 520,1224 575,1220.5 608.7,1218.5 608.7,1232 575,1234 520,1238 427,1241.5" fill="#5578bf"/>
<polygon points="467.3,1229 478.8,1228.3 478.8,1240.4 467.3,1241" fill="#1a2640"/>
<polygon points="478.8,1229 486,1228.5 486,1239.5 478.8,1240" fill="#5578bf"/>
<polygon points="486,1228.5 495,1227.9 495,1238.9 486,1239.5" fill="#7f9dd6"/>
<polygon points="495,1227.9 503.8,1227.2 503.8,1238.2 495,1238.9" fill="#94afdd"/>
<polygon points="503.8,1227.2 512,1226.7 512,1237.7 503.8,1238.2" fill="#b6cde9"/>
<polygon points="512,1226.7 520,1226.1 520,1237.1 512,1237.7" fill="#c4dff1"/>
<polygon points="575,1219.5 582.7,1219 582.7,1233.5 575,1234" fill="#b6cde9"/>
<polygon points="582.7,1219 608.7,1218.5 608.7,1232 582.7,1233.5" fill="#fbdf00"/>
<polygon points="596,1218.7 608.7,1218.5 608.7,1232 596,1232.7" fill="#fbc400"/>
<polygon points="427,1241.5 520,1238 520,1262 427,1269" fill="#f98f00"/>
<polygon points="436.5,1242 467.3,1241 467.3,1254 436.5,1255.5" fill="#c4dff1"/>
<polygon points="457,1255 467.3,1254.5 467.3,1266 457,1266.7" fill="#fbc400"/>
<polygon points="467.3,1241 478.8,1240.4 478.8,1265 467.3,1266" fill="#3e2c00"/>
<line x1="470.5" y1="1241" x2="470.5" y2="1266" stroke="#b9a000" stroke-width="1"/>
<line x1="475" y1="1241" x2="475" y2="1265.5" stroke="#caa800" stroke-width="1"/>
<line x1="467.3" y1="1253.5" x2="478.8" y2="1253" stroke="#8aa3d6" stroke-width="1"/>
<polygon points="488.5,1240 503.8,1239 503.8,1252 488.5,1253" fill="#f6ef00"/>
<polygon points="503.8,1239 520,1238 520,1262 503.8,1263.2" fill="#fbc400"/>
<polygon points="495,1253 503.8,1252.5 503.8,1263.2 495,1264" fill="#fbab00"/>
<polygon points="520,1234.8 548,1233.5 548,1248.5 520,1249.5" fill="#94afdd"/>
<polygon points="548,1233.5 582.7,1232.5 582.7,1246 548,1247.5" fill="#b6cde9"/>
<polygon points="560,1233 582.7,1232.5 582.7,1246 560,1247" fill="#c4dff1"/>
<polygon points="582.7,1232.5 608.7,1231.5 608.7,1245 582.7,1246" fill="#f6ef00"/>
<polygon points="596,1232 608.7,1231.5 608.7,1258 596,1258.6" fill="#fbc400"/>
<polygon points="520,1249.5 530.8,1249 530.8,1261.5 520,1262" fill="#94afdd"/>
<polygon points="530.8,1248.6 548,1248 548,1260.6 530.8,1261.5" fill="#c4dff1"/>
<polygon points="548,1247.5 575,1246.3 575,1259.6 548,1260.6" fill="#f6ef00"/>
<polygon points="575,1246.3 596,1245.5 596,1258.6 575,1259.6" fill="#fbc400"/>
</svg>
<div id="dlg"></div>
<svg id="frame" width="920" height="1300" viewBox="680 0 920 1300"><rect x="686" y="14.4" width="1000" height="1268.6" rx="12" fill="#f0f0f0" stroke="#a9a9a9" stroke-width="1.5"/><path d="M686.75 71.5 L686.75 26.4 A11.25 11.25 0 0 1 698 15.15 L1600 15.15 L1600 71.5 Z" fill="#fff"/><path d="M687.6 71 L687.6 1271 A11 11 0 0 0 698.6 1281.8 L1600 1281.8" fill="none" stroke="#f7f7f7" stroke-width="1"/></svg>
<div id="w">
<span id="title">Visibility/Graphic Overrides for 3D View: {3D}</span>
<div id="panel"></div>
<div class="tab" style="left:898px;width:235px"><span style="left:7.4px;letter-spacing:0.05px">Annotation Categories</span></div>
<div class="tab" style="left:1133px;width:221px"><span style="left:10.7px;letter-spacing:0.22px">Imported Categories</span></div>
<div class="tab act" style="left:700px;width:198px"><span style="left:14.7px;letter-spacing:-0.16px">Model Categories</span></div>
<div id="chk"><svg width="26" height="26" viewBox="0 0 26 26"><path d="M7 13.4 L11.2 17.6 L19.2 8.8" fill="none" stroke="#fff" stroke-width="1.7" stroke-linecap="round" stroke-linejoin="round"/></svg></div>
<div id="chklbl"><u>S</u>how model categories in this view</div>
<div id="tbl">
<div id="thead"><span>Visibility</span></div>
<div class="row" style="top:40px"><span class="rt" style="left:78.5px;letter-spacing:0.57px">Generic Models</span></div>
<div class="row" style="top:76px"><span class="rt" style="left:120.5px;letter-spacing:0.56px">&lt;Hidden Lines&gt;</span></div>
<div class="row sel" style="top:112px"><span class="rt" style="left:119px;letter-spacing:-0.29px">Solar Access_0</span></div>
<div class="row" style="top:148px"><span class="rt" style="left:119px;letter-spacing:-0.29px">Solar Access_0.5</span></div>
<div class="row" style="top:184px"><span class="rt" style="left:119px;letter-spacing:-0.29px">Solar Access_0.25</span></div>
<div class="row" style="top:220px"><span class="rt" style="left:119px;letter-spacing:-0.29px">Solar Access_0.75</span></div>
<div class="row" style="top:256px"><span class="rt" style="left:119px;letter-spacing:-0.29px">Solar Access_1</span></div>
<div class="row" style="top:292px"><span class="rt" style="left:119px;letter-spacing:-0.29px">Solar Access_1.5</span></div>
<div class="row" style="top:328px"><span class="rt" style="left:119px;letter-spacing:-0.29px">Solar Access_1.25</span></div>
<div class="row" style="top:364px"><span class="rt" style="left:119px;letter-spacing:-0.29px">Solar Access_1.75</span></div>
<div class="row" style="top:400px"><span class="rt" style="left:119px;letter-spacing:-0.29px">Solar Access_2</span></div>
<div class="row" style="top:436px"><span class="rt" style="left:119px;letter-spacing:-0.29px">Solar Access_2.5</span></div>
<div class="row" style="top:472px"><span class="rt" style="left:119px;letter-spacing:-0.29px">Solar Access_2.25</span></div>
<div class="row" style="top:508px"><span class="rt" style="left:119px;letter-spacing:-0.29px">Solar Access_2.75</span></div>
<div class="row" style="top:544px"><span class="rt" style="left:119px;letter-spacing:-0.29px">Solar Access_3</span></div>
<div class="row" style="top:580px"><span class="rt" style="left:119px;letter-spacing:-0.29px">Solar Access_3.5</span></div>
<div class="row" style="top:616px"><span class="rt" style="left:119px;letter-spacing:-0.29px">Solar Access_3.25</span></div>
<div class="row" style="top:652px"><span class="rt" style="left:119px;letter-spacing:-0.29px">Solar Access_3.75</span></div>
</div>
<div class="vline" style="left:788px;top:376px;height:604px"></div>
<div class="hline" style="left:758px;top:358px;width:13px"></div>
<div class="hline" style="left:789px;top:394px;width:23px"></div>
<div class="hline" style="left:789px;top:430px;width:23px"></div>
<div class="hline" style="left:789px;top:466px;width:23px"></div>
<div class="hline" style="left:789px;top:502px;width:23px"></div>
<div class="hline" style="left:789px;top:538px;width:23px"></div>
<div class="hline" style="left:789px;top:574px;width:23px"></div>
<div class="hline" style="left:789px;top:610px;width:23px"></div>
<div class="hline" style="left:789px;top:646px;width:23px"></div>
<div class="hline" style="left:789px;top:682px;width:23px"></div>
<div class="hline" style="left:789px;top:718px;width:23px"></div>
<div class="hline" style="left:789px;top:754px;width:23px"></div>
<div class="hline" style="left:789px;top:790px;width:23px"></div>
<div class="hline" style="left:789px;top:826px;width:23px"></div>
<div class="hline" style="left:789px;top:862px;width:23px"></div>
<div class="hline" style="left:789px;top:898px;width:23px"></div>
<div class="hline" style="left:789px;top:934px;width:23px"></div>
<div class="hline" style="left:789px;top:970px;width:23px"></div>
<div id="minus"><i></i></div>
<svg class="cb" style="left:775px;top:344px" width="24" height="24" viewBox="0 0 24 24"><rect x="1.5" y="1.3" width="20.4" height="20.5" fill="#fff" stroke="#808080" stroke-width="2"/><rect x="3" y="2.8" width="17.4" height="17.5" fill="none" stroke="#dedede" stroke-width="1"/><path d="M4.5 8.3 L6 8.3 L9.9 12.5 L17.4 4.2 L19 4.2 L19 10 L9.9 18.9 L4.5 14.3 Z" fill="#000"/></svg>
<svg class="cb" style="left:816px;top:380px" width="24" height="24" viewBox="0 0 24 24"><rect x="1.5" y="1.3" width="20.4" height="20.5" fill="#fff" stroke="#808080" stroke-width="2"/><rect x="3" y="2.8" width="17.4" height="17.5" fill="none" stroke="#dedede" stroke-width="1"/><path d="M4.5 8.3 L6 8.3 L9.9 12.5 L17.4 4.2 L19 4.2 L19 10 L9.9 18.9 L4.5 14.3 Z" fill="#000"/></svg>
<svg class="cb" style="left:816px;top:416px" width="24" height="24" viewBox="0 0 24 24"><rect x="1.5" y="1.3" width="20.4" height="20.5" fill="#fff" stroke="#808080" stroke-width="2"/><rect x="3" y="2.8" width="17.4" height="17.5" fill="none" stroke="#dedede" stroke-width="1"/><path d="M4.5 8.3 L6 8.3 L9.9 12.5 L17.4 4.2 L19 4.2 L19 10 L9.9 18.9 L4.5 14.3 Z" fill="#000"/></svg>
<svg class="cb" style="left:816px;top:452px" width="24" height="24" viewBox="0 0 24 24"><rect x="1.5" y="1.3" width="20.4" height="20.5" fill="#fff" stroke="#808080" stroke-width="2"/><rect x="3" y="2.8" width="17.4" height="17.5" fill="none" stroke="#dedede" stroke-width="1"/><path d="M4.5 8.3 L6 8.3 L9.9 12.5 L17.4 4.2 L19 4.2 L19 10 L9.9 18.9 L4.5 14.3 Z" fill="#000"/></svg>
<svg class="cb" style="left:816px;top:488px" width="24" height="24" viewBox="0 0 24 24"><rect x="1.5" y="1.3" width="20.4" height="20.5" fill="#fff" stroke="#808080" stroke-width="2"/><rect x="3" y="2.8" width="17.4" height="17.5" fill="none" stroke="#dedede" stroke-width="1"/><path d="M4.5 8.3 L6 8.3 L9.9 12.5 L17.4 4.2 L19 4.2 L19 10 L9.9 18.9 L4.5 14.3 Z" fill="#000"/></svg>
<svg class="cb" style="left:816px;top:524px" width="24" height="24" viewBox="0 0 24 24"><rect x="1.5" y="1.3" width="20.4" height="20.5" fill="#fff" stroke="#808080" stroke-width="2"/><rect x="3" y="2.8" width="17.4" height="17.5" fill="none" stroke="#dedede" stroke-width="1"/><path d="M4.5 8.3 L6 8.3 L9.9 12.5 L17.4 4.2 L19 4.2 L19 10 L9.9 18.9 L4.5 14.3 Z" fill="#000"/></svg>
<svg class="cb" style="left:816px;top:560px" width="24" height="24" viewBox="0 0 24 24"><rect x="1.5" y="1.3" width="20.4" height="20.5" fill="#fff" stroke="#808080" stroke-width="2"/><rect x="3" y="2.8" width="17.4" height="17.5" fill="none" stroke="#dedede" stroke-width="1"/><path d="M4.5 8.3 L6 8.3 L9.9 12.5 L17.4 4.2 L19 4.2 L19 10 L9.9 18.9 L4.5 14.3 Z" fill="#000"/></svg>
<svg class="cb" style="left:816px;top:596px" width="24" height="24" viewBox="0 0 24 24"><rect x="1.5" y="1.3" width="20.4" height="20.5" fill="#fff" stroke="#808080" stroke-width="2"/><rect x="3" y="2.8" width="17.4" height="17.5" fill="none" stroke="#dedede" stroke-width="1"/><path d="M4.5 8.3 L6 8.3 L9.9 12.5 L17.4 4.2 L19 4.2 L19 10 L9.9 18.9 L4.5 14.3 Z" fill="#000"/></svg>
<svg class="cb" style="left:816px;top:632px" width="24" height="24" viewBox="0 0 24 24"><rect x="1.5" y="1.3" width="20.4" height="20.5" fill="#fff" stroke="#808080" stroke-width="2"/><rect x="3" y="2.8" width="17.4" height="17.5" fill="none" stroke="#dedede" stroke-width="1"/><path d="M4.5 8.3 L6 8.3 L9.9 12.5 L17.4 4.2 L19 4.2 L19 10 L9.9 18.9 L4.5 14.3 Z" fill="#000"/></svg>
<svg class="cb" style="left:816px;top:668px" width="24" height="24" viewBox="0 0 24 24"><rect x="1.5" y="1.3" width="20.4" height="20.5" fill="#fff" stroke="#808080" stroke-width="2"/><rect x="3" y="2.8" width="17.4" height="17.5" fill="none" stroke="#dedede" stroke-width="1"/><path d="M4.5 8.3 L6 8.3 L9.9 12.5 L17.4 4.2 L19 4.2 L19 10 L9.9 18.9 L4.5 14.3 Z" fill="#000"/></svg>
<svg class="cb" style="left:816px;top:704px" width="24" height="24" viewBox="0 0 24 24"><rect x="1.5" y="1.3" width="20.4" height="20.5" fill="#fff" stroke="#808080" stroke-width="2"/><rect x="3" y="2.8" width="17.4" height="17.5" fill="none" stroke="#dedede" stroke-width="1"/><path d="M4.5 8.3 L6 8.3 L9.9 12.5 L17.4 4.2 L19 4.2 L19 10 L9.9 18.9 L4.5 14.3 Z" fill="#000"/></svg>
<svg class="cb" style="left:816px;top:740px" width="24" height="24" viewBox="0 0 24 24"><rect x="1.5" y="1.3" width="20.4" height="20.5" fill="#fff" stroke="#808080" stroke-width="2"/><rect x="3" y="2.8" width="17.4" height="17.5" fill="none" stroke="#dedede" stroke-width="1"/><path d="M4.5 8.3 L6 8.3 L9.9 12.5 L17.4 4.2 L19 4.2 L19 10 L9.9 18.9 L4.5 14.3 Z" fill="#000"/></svg>
<svg class="cb" style="left:816px;top:776px" width="24" height="24" viewBox="0 0 24 24"><rect x="1.5" y="1.3" width="20.4" height="20.5" fill="#fff" stroke="#808080" stroke-width="2"/><rect x="3" y="2.8" width="17.4" height="17.5" fill="none" stroke="#dedede" stroke-width="1"/><path d="M4.5 8.3 L6 8.3 L9.9 12.5 L17.4 4.2 L19 4.2 L19 10 L9.9 18.9 L4.5 14.3 Z" fill="#000"/></svg>
<svg class="cb" style="left:816px;top:812px" width="24" height="24" viewBox="0 0 24 24"><rect x="1.5" y="1.3" width="20.4" height="20.5" fill="#fff" stroke="#808080" stroke-width="2"/><rect x="3" y="2.8" width="17.4" height="17.5" fill="none" stroke="#dedede" stroke-width="1"/><path d="M4.5 8.3 L6 8.3 L9.9 12.5 L17.4 4.2 L19 4.2 L19 10 L9.9 18.9 L4.5 14.3 Z" fill="#000"/></svg>
<svg class="cb" style="left:816px;top:848px" width="24" height="24" viewBox="0 0 24 24"><rect x="1.5" y="1.3" width="20.4" height="20.5" fill="#fff" stroke="#808080" stroke-width="2"/><rect x="3" y="2.8" width="17.4" height="17.5" fill="none" stroke="#dedede" stroke-width="1"/><path d="M4.5 8.3 L6 8.3 L9.9 12.5 L17.4 4.2 L19 4.2 L19 10 L9.9 18.9 L4.5 14.3 Z" fill="#000"/></svg>
<svg class="cb" style="left:816px;top:884px" width="24" height="24" viewBox="0 0 24 24"><rect x="1.5" y="1.3" width="20.4" height="20.5" fill="#fff" stroke="#808080" stroke-width="2"/><rect x="3" y="2.8" width="17.4" height="17.5" fill="none" stroke="#dedede" stroke-width="1"/><path d="M4.5 8.3 L6 8.3 L9.9 12.5 L17.4 4.2 L19 4.2 L19 10 L9.9 18.9 L4.5 14.3 Z" fill="#000"/></svg>
<svg class="cb" style="left:816px;top:920px" width="24" height="24" viewBox="0 0 24 24"><rect x="1.5" y="1.3" width="20.4" height="20.5" fill="#fff" stroke="#808080" stroke-width="2"/><rect x="3" y="2.8" width="17.4" height="17.5" fill="none" stroke="#dedede" stroke-width="1"/><path d="M4.5 8.3 L6 8.3 L9.9 12.5 L17.4 4.2 L19 4.2 L19 10 L9.9 18.9 L4.5 14.3 Z" fill="#000"/></svg>
<svg class="cb" style="left:816px;top:956px" width="24" height="24" viewBox="0 0 24 24"><rect x="1.5" y="1.3" width="20.4" height="20.5" fill="#fff" stroke="#808080" stroke-width="2"/><rect x="3" y="2.8" width="17.4" height="17.5" fill="none" stroke="#dedede" stroke-width="1"/><path d="M4.5 8.3 L6 8.3 L9.9 12.5 L17.4 4.2 L19 4.2 L19 10 L9.9 18.9 L4.5 14.3 Z" fill="#000"/></svg>
<div id="mask"></div>
<div class="btn" style="left:730px;top:988px;width:182px;height:49px"><span>A<u>l</u>l</span></div>
<div class="btn" style="left:926px;top:988px;width:182px;height:49px"><span><u>N</u>one</span></div>
<div class="btn" style="left:1122px;top:988px;width:182px;height:49px"><span><u>I</u>nvert</span></div>
<div class="btn" style="left:1318px;top:988px;width:182px;height:49px"><span>E<u>x</u>pand All</span></div>
<div id="grp"></div>
<div id="note">Categories that are not overridden are drawn<br><span style="letter-spacing:0.13px">according to Object Style settings.</span></div>
<div class="btn" style="left:1260px;top:1069px;width:222px;height:49px"><span style="letter-spacing:0.25px"><u>O</u>bject Styles...</span></div>
</div>
</body></html>
